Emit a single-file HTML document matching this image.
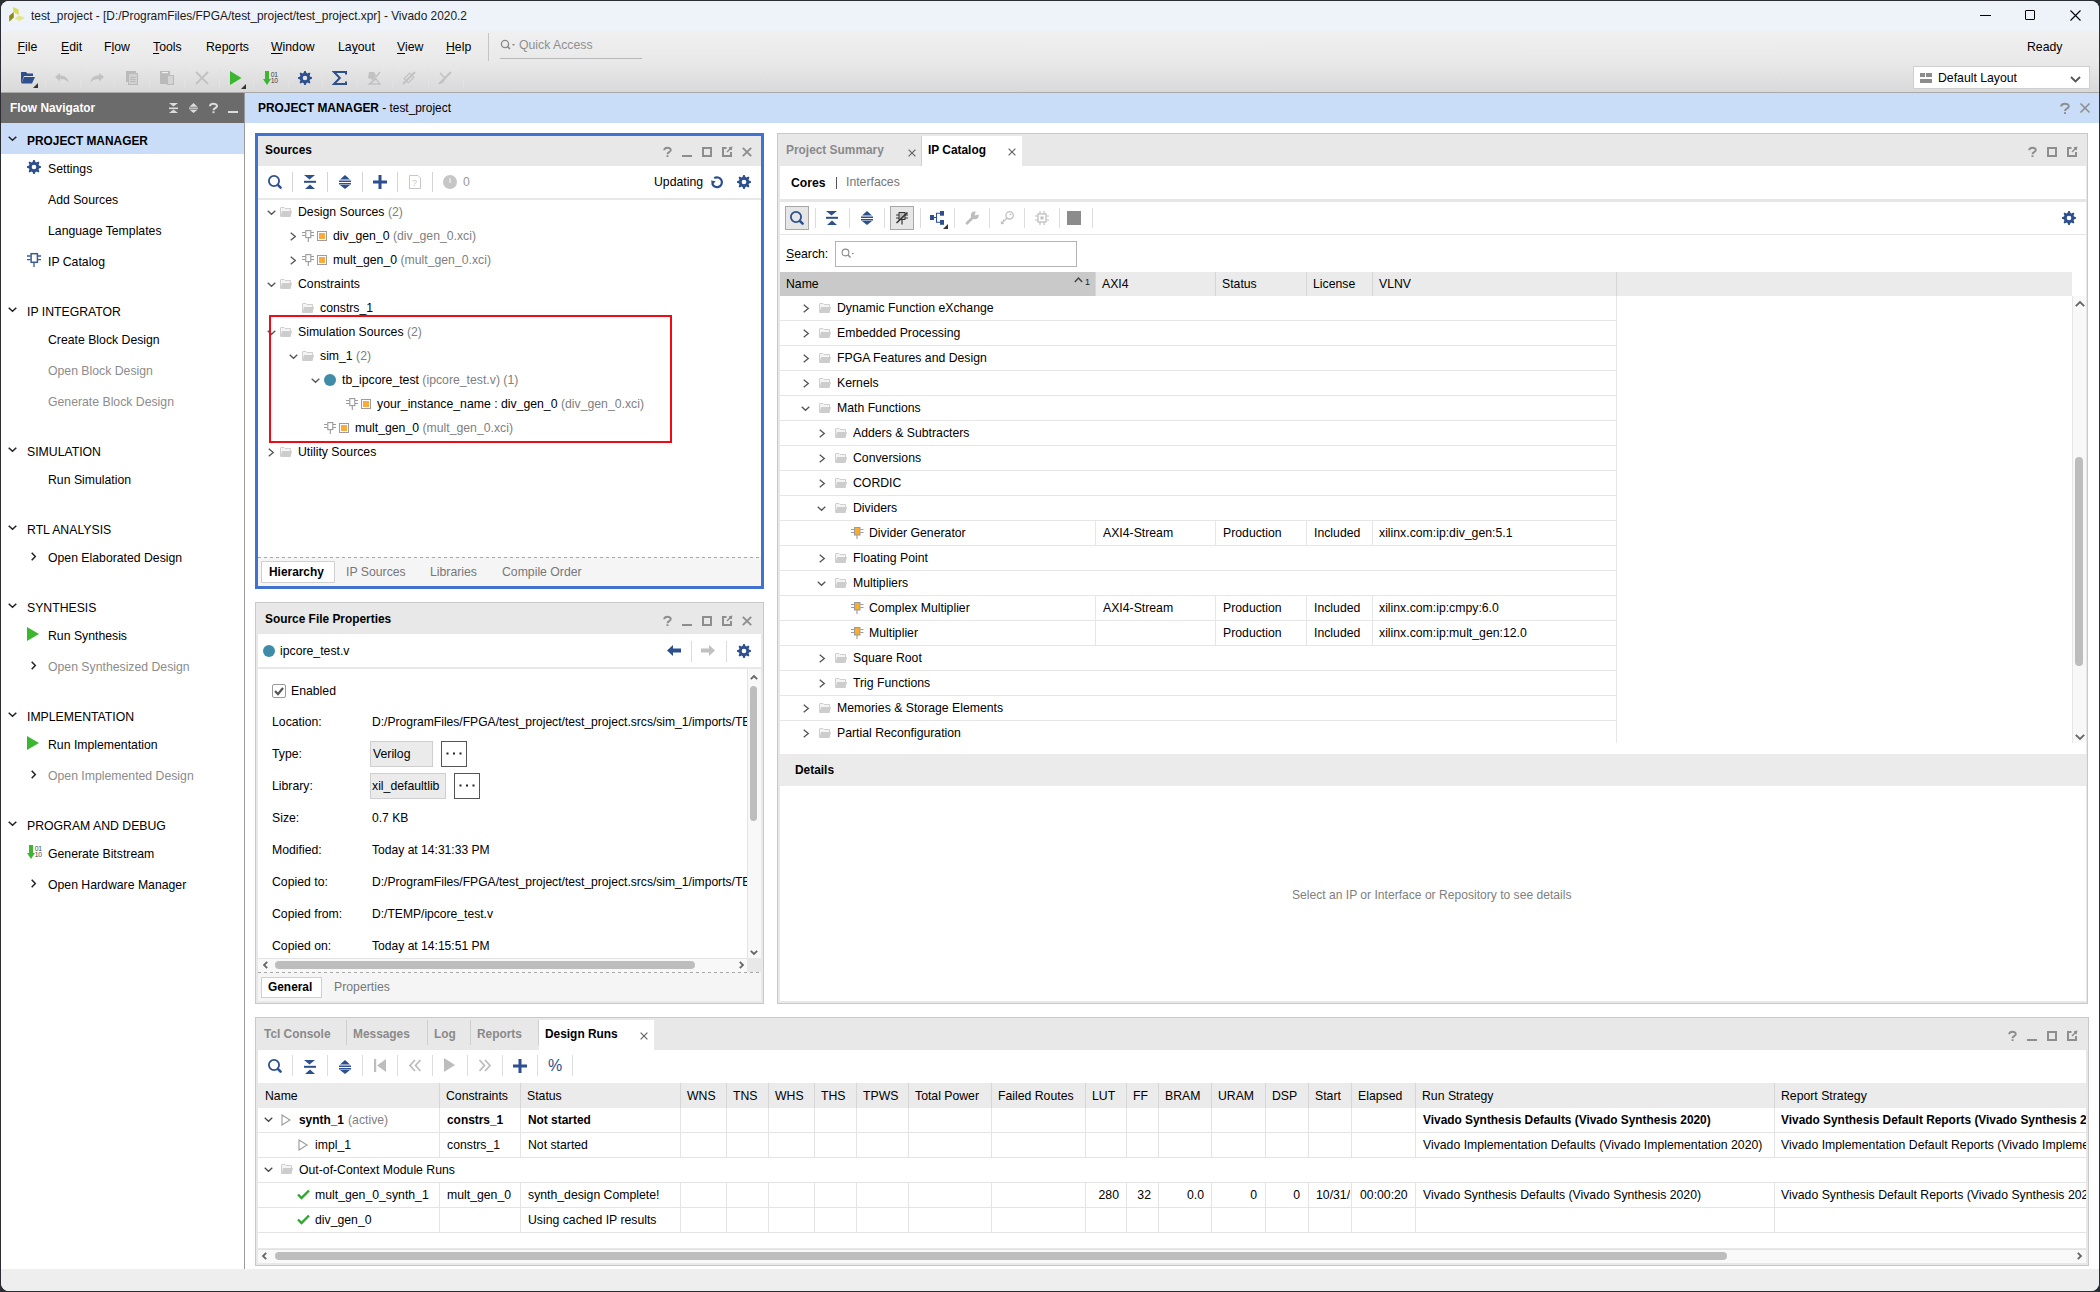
<!DOCTYPE html>
<html><head><meta charset="utf-8"><title>Vivado</title>
<style>
html,body{margin:0;padding:0;}
body{width:2100px;height:1292px;position:relative;overflow:hidden;background:#2a2d34;font-family:"Liberation Sans",sans-serif;}
.t{position:absolute;white-space:pre;line-height:1;}
svg{overflow:visible}
</style></head><body>

<div style="position:absolute;left:1px;top:1px;width:2098px;height:1290px;background:#fff;border-radius:8px;overflow:hidden"></div>
<div style="position:absolute;left:1px;top:1px;width:2098px;height:30px;background:#eef3fa;border-radius:8px 8px 0 0"></div>
<div style="position:absolute;left:1px;top:31px;width:2098px;height:61px;background:linear-gradient(#f0f0f0,#e9e9e9 50%,#d9d9d9)"></div>
<div style="position:absolute;left:1px;top:92px;width:2098px;height:1px;background:#a9a9a9"></div>
<div style="position:absolute;left:1px;top:1269px;width:2098px;height:22px;background:#eeeeee;border-radius:0 0 8px 8px"></div>
<svg style="position:absolute;left:9px;top:7px" width="17" height="16" viewBox="0 0 17 16"><polygon points="4,0 9.5,2.5 9.8,8 4.5,5" fill="#d8dc50"/><polygon points="0.2,8.8 4.7,5 4.8,10.5 0.3,14.8" fill="#8a8c10"/><polygon points="5.8,11.3 9.8,8.5 16,10.8 10.5,14" fill="#e3e68a"/></svg>
<div class="t" style="left:31px;top:11.23px;font-size:11.9px;color:#1a1a1a;">test_project - [D:/ProgramFiles/FPGA/test_project/test_project.xpr] - Vivado 2020.2</div>
<div style="position:absolute;left:1980px;top:15px;width:11px;height:1px;background:#000"></div>
<div style="position:absolute;left:2025px;top:10px;width:10px;height:10px;border:1px solid #000;box-sizing:border-box;border-radius:1px"></div>
<svg style="position:absolute;left:2070px;top:10px" width="11" height="11" viewBox="0 0 11 11"><path d="M0.5,0.5 L10.5,10.5 M10.5,0.5 L0.5,10.5" stroke="#000" stroke-width="1.1"/></svg>
<div class="t" style="left:17.5px;top:40.63px;font-size:12.25px;color:#000;text-underline-offset:2px;"><u>F</u>ile</div>
<div class="t" style="left:61px;top:40.63px;font-size:12.25px;color:#000;text-underline-offset:2px;"><u>E</u>dit</div>
<div class="t" style="left:104px;top:40.63px;font-size:12.25px;color:#000;text-underline-offset:2px;">F<u>l</u>ow</div>
<div class="t" style="left:153px;top:40.63px;font-size:12.25px;color:#000;text-underline-offset:2px;"><u>T</u>ools</div>
<div class="t" style="left:206px;top:40.63px;font-size:12.25px;color:#000;text-underline-offset:2px;">Rep<u>o</u>rts</div>
<div class="t" style="left:271px;top:40.63px;font-size:12.25px;color:#000;text-underline-offset:2px;"><u>W</u>indow</div>
<div class="t" style="left:338px;top:40.63px;font-size:12.25px;color:#000;text-underline-offset:2px;">La<u>y</u>out</div>
<div class="t" style="left:397px;top:40.63px;font-size:12.25px;color:#000;text-underline-offset:2px;"><u>V</u>iew</div>
<div class="t" style="left:446px;top:40.63px;font-size:12.25px;color:#000;text-underline-offset:2px;"><u>H</u>elp</div>
<div style="position:absolute;left:488px;top:33px;width:1px;height:28px;background:#c4c4c4"></div>
<svg style="position:absolute;left:500px;top:39px" width="16" height="12" viewBox="0 0 16 12"><circle cx="5" cy="5" r="3.6" fill="none" stroke="#8a8a8a" stroke-width="1.3"/><path d="M7.6,7.6 L10,10" stroke="#8a8a8a" stroke-width="1.6"/><path d="M12,5 L15,5 L13.5,7z" fill="#8a8a8a"/></svg>
<div class="t" style="left:519px;top:38.63px;font-size:12.25px;color:#8f8f8f;">Quick Access</div>
<div style="position:absolute;left:500px;top:58px;width:142px;height:1px;background:#b8b8b8"></div>
<div class="t" style="left:2027px;top:40.63px;font-size:12.25px;color:#000;">Ready</div>
<div style="position:absolute;left:1913px;top:66px;width:177px;height:23px;background:#fff;border:1px solid #cfcfcf;box-sizing:border-box"></div>
<svg style="position:absolute;left:1920px;top:73px" width="13" height="11" viewBox="0 0 13 11"><rect x="0" y="0" width="5" height="4" fill="#8c8c8c"/><rect x="6" y="0" width="6" height="4" fill="#8c8c8c"/><rect x="0" y="6" width="12" height="4" fill="#8c8c8c"/></svg>
<div class="t" style="left:1938px;top:71.63px;font-size:12.25px;color:#000;">Default Layout</div>
<svg style="position:absolute;left:2070px;top:76px" width="11" height="7" viewBox="0 0 11 7"><path d="M1,1 L5.5,5.5 L10,1" fill="none" stroke="#555" stroke-width="1.8"/></svg>
<div style="position:absolute;left:45px;top:68px;width:1px;height:20px;background:#e2e2e2"></div>
<div style="position:absolute;left:80px;top:68px;width:1px;height:20px;background:#e2e2e2"></div>
<div style="position:absolute;left:114px;top:68px;width:1px;height:20px;background:#e2e2e2"></div>
<div style="position:absolute;left:149px;top:68px;width:1px;height:20px;background:#e2e2e2"></div>
<div style="position:absolute;left:184px;top:68px;width:1px;height:20px;background:#e2e2e2"></div>
<div style="position:absolute;left:219px;top:68px;width:1px;height:20px;background:#e2e2e2"></div>
<div style="position:absolute;left:253px;top:68px;width:1px;height:20px;background:#e2e2e2"></div>
<div style="position:absolute;left:288px;top:68px;width:1px;height:20px;background:#e2e2e2"></div>
<div style="position:absolute;left:322px;top:68px;width:1px;height:20px;background:#e2e2e2"></div>
<div style="position:absolute;left:357px;top:68px;width:1px;height:20px;background:#e2e2e2"></div>
<div style="position:absolute;left:392px;top:68px;width:1px;height:20px;background:#e2e2e2"></div>
<div style="position:absolute;left:428px;top:68px;width:1px;height:20px;background:#e2e2e2"></div>
<div style="position:absolute;left:463px;top:68px;width:1px;height:20px;background:#e2e2e2"></div>
<svg style="position:absolute;left:21px;top:71px" width="14" height="13" viewBox="0 0 14 13"><path d="M0,1 L5,1 L6.5,2.5 L12,2.5 L12,5 L3,5 L0.5,12 L0,12z" fill="#2d4f8e"/><path d="M3,6 L14,6 L11,12.5 L0.5,12.5z" fill="#2d4f8e"/></svg>
<svg style="position:absolute;left:33px;top:83px" width="5" height="5" viewBox="0 0 5 5"><polygon points="5,0 5,5 0,5" fill="#333"/></svg>
<svg style="position:absolute;left:55px;top:73px" width="14" height="10" viewBox="0 0 14 10"><path d="M0,4 L5,0 L5,2.5 C10,2.5 13,5 13.5,9.5 C11.5,7 9,6 5,6 L5,8.5z" fill="#c2c2c2"/></svg>
<svg style="position:absolute;left:90px;top:73px" width="14" height="10" viewBox="0 0 14 10"><path d="M14,4 L9,0 L9,2.5 C4,2.5 1,5 0.5,9.5 C2.5,7 5,6 9,6 L9,8.5z" fill="#c2c2c2"/></svg>
<svg style="position:absolute;left:126px;top:71px" width="12" height="14" viewBox="0 0 12 14"><rect x="0" y="0" width="10" height="11" fill="#bababa"/><rect x="2.5" y="2.5" width="9" height="11" fill="#d0d0d0" stroke="#bababa"/><path d="M4.2,6.5h5.6M4.2,8.5h5.6M4.2,10.5h5.6" stroke="#bababa" stroke-width="1"/></svg>
<svg style="position:absolute;left:160px;top:71px" width="14" height="14" viewBox="0 0 14 14"><rect x="0" y="0" width="10" height="13" fill="#bababa"/><rect x="2" y="1" width="6" height="1.2" fill="#eeeeee"/><rect x="7.5" y="4.5" width="6" height="9" fill="#d4d4d4" stroke="#bababa"/></svg>
<svg style="position:absolute;left:195px;top:71px" width="14" height="14" viewBox="0 0 14 14"><path d="M1,1 L13,13 M13,1 L1,13" stroke="#c2c2c2" stroke-width="1.8"/></svg>
<svg style="position:absolute;left:230px;top:71px" width="12" height="14" viewBox="0 0 12 14"><polygon points="0,0 11.5,7 0,14" fill="#3cb630"/></svg>
<svg style="position:absolute;left:241px;top:84px" width="5" height="5" viewBox="0 0 5 5"><polygon points="5,0 5,5 0,5" fill="#333"/></svg>
<svg style="position:absolute;left:263px;top:71px" width="15" height="14" viewBox="0 0 15 14"><rect x="2" y="0" width="4" height="9" fill="#3cb630"/><polygon points="0,8 8,8 4,14" fill="#3cb630"/><text x="7.8" y="5.6" font-size="6.8" font-family="Liberation Sans" fill="#444" letter-spacing="-0.4">01</text><text x="7.8" y="11.6" font-size="6.8" font-family="Liberation Sans" fill="#444" letter-spacing="-0.4">10</text></svg>
<svg style="position:absolute;left:298px;top:71px" width="14" height="14" viewBox="0 0 14 14"><polygon points="6.31,0.03 7.69,0.03 8.51,2.02 9.45,2.41 11.44,1.59 12.41,2.56 11.59,4.55 11.98,5.49 13.97,6.31 13.97,7.69 11.98,8.51 11.59,9.45 12.41,11.44 11.44,12.41 9.45,11.59 8.51,11.98 7.69,13.97 6.31,13.97 5.49,11.98 4.55,11.59 2.56,12.41 1.59,11.44 2.41,9.45 2.02,8.51 0.03,7.69 0.03,6.31 2.02,5.49 2.41,4.55 1.59,2.56 2.56,1.59 4.55,2.41 5.49,2.02" fill="#2d4f8e"/><circle cx="7" cy="7" r="2.3" fill="#e3e3e3"/></svg>
<svg style="position:absolute;left:333px;top:71px" width="14" height="14" viewBox="0 0 14 14"><path d="M13,3.5 L13,1 L1,1 L6.8,7 L1,13 L13,13 L13,10.5" fill="none" stroke="#2d4f8e" stroke-width="2"/></svg>
<svg style="position:absolute;left:367px;top:71px" width="14" height="14" viewBox="0 0 14 14"><path d="M2,1 L7,1 L9,4 L6,9 L1,7z" fill="#c2c2c2"/><path d="M2,13 L13,13 L9,8 z" fill="none" stroke="#c2c2c2" stroke-width="1.3"/><path d="M13,1 L4,12" stroke="#c2c2c2" stroke-width="1.5"/></svg>
<svg style="position:absolute;left:402px;top:71px" width="14" height="14" viewBox="0 0 14 14"><rect x="3" y="4" width="8" height="6" transform="rotate(-45 7 7)" fill="none" stroke="#c2c2c2" stroke-width="1.2"/><path d="M1,13 L13,1" stroke="#c2c2c2" stroke-width="2"/></svg>
<svg style="position:absolute;left:438px;top:71px" width="14" height="14" viewBox="0 0 14 14"><path d="M1,13 L13,1" stroke="#c2c2c2" stroke-width="2"/><path d="M2,2 L7,7 L4,12" fill="none" stroke="#c2c2c2" stroke-width="1.5"/></svg>
<div style="position:absolute;left:1px;top:93px;width:243px;height:30px;background:#6b6b6b"></div>
<div class="t" style="left:10px;top:102.93px;font-size:11.9px;font-weight:bold;color:#fff;">Flow Navigator</div>
<svg style="position:absolute;left:169px;top:103px" width="9" height="10" viewBox="0 0 9 10"><polygon points="0,0 9,0 4.5,3.6" fill="#dcdcdc"/><rect x="0" y="4.5" width="9" height="1.6" fill="#dcdcdc"/><polygon points="0,10 9,10 4.5,6.6" fill="#dcdcdc"/></svg>
<svg style="position:absolute;left:189px;top:103px" width="9" height="10" viewBox="0 0 9 10"><polygon points="0.5,3.8 8.5,3.8 4.5,0" fill="#dcdcdc"/><rect x="0" y="4.4" width="9" height="1.8" fill="#bdbdbd"/><polygon points="0.5,6.8 8.5,6.8 4.5,10" fill="#dcdcdc"/></svg>
<svg style="position:absolute;left:208.5px;top:103px" width="9" height="10" viewBox="0 0 9 10"><path d="M1,3.2 C1,0 8,0 8,3 C8,5.3 4.5,5 4.5,7.2" fill="none" stroke="#dcdcdc" stroke-width="2"/><rect x="3.5" y="8.3" width="2" height="1.8" fill="#dcdcdc"/></svg>
<div style="position:absolute;left:228px;top:111px;width:10px;height:2px;background:#dcdcdc"></div>
<div style="position:absolute;left:244px;top:93px;width:1px;height:1176px;background:#9a9a9a"></div>
<div style="position:absolute;left:245px;top:93px;width:1854px;height:30px;background:#c9ddf8"></div>
<div class="t" style="left:258px;top:102.93px;font-size:11.9px;font-weight:bold;color:#000;">PROJECT MANAGER <span style="font-weight:normal">- test_project</span></div>
<svg style="position:absolute;left:2060px;top:103px" width="10" height="11" viewBox="0 0 10 11"><path d="M1.2,3.4 C1.2,0 8.8,0 8.8,3.2 C8.8,5.8 5,5.5 5,8" fill="none" stroke="#8e8e8e" stroke-width="2"/><rect x="4" y="9.2" width="2" height="1.8" fill="#8e8e8e"/></svg>
<svg style="position:absolute;left:2080px;top:103px" width="10" height="10" viewBox="0 0 10 10"><path d="M0.5,0.5 L9.5,9.5 M9.5,0.5 L0.5,9.5" stroke="#8e8e8e" stroke-width="1.6"/></svg>
<div style="position:absolute;left:1px;top:123px;width:243px;height:31px;background:#c9ddf8"></div>
<svg style="position:absolute;left:8px;top:136px" width="9" height="5" viewBox="0 0 9 5"><path d="M0.7,0.7 L4.5,4.3 L8.3,0.7" fill="none" stroke="#222" stroke-width="1.5"/></svg>
<div class="t" style="left:27px;top:135.93px;font-size:11.9px;font-weight:bold;color:#000;">PROJECT MANAGER</div>
<svg style="position:absolute;left:27px;top:160px" width="14" height="14" viewBox="0 0 14 14"><polygon points="6.31,0.03 7.69,0.03 8.51,2.02 9.45,2.41 11.44,1.59 12.41,2.56 11.59,4.55 11.98,5.49 13.97,6.31 13.97,7.69 11.98,8.51 11.59,9.45 12.41,11.44 11.44,12.41 9.45,11.59 8.51,11.98 7.69,13.97 6.31,13.97 5.49,11.98 4.55,11.59 2.56,12.41 1.59,11.44 2.41,9.45 2.02,8.51 0.03,7.69 0.03,6.31 2.02,5.49 2.41,4.55 1.59,2.56 2.56,1.59 4.55,2.41 5.49,2.02" fill="#2d4f8e"/><circle cx="7" cy="7" r="2.3" fill="#fff"/></svg>
<div class="t" style="left:48px;top:162.63px;font-size:12.25px;color:#000;">Settings</div>
<div class="t" style="left:48px;top:193.63px;font-size:12.25px;color:#000;">Add Sources</div>
<div class="t" style="left:48px;top:224.63px;font-size:12.25px;color:#000;">Language Templates</div>
<svg style="position:absolute;left:26.5px;top:252px" width="14" height="15" viewBox="0 0 14 15"><rect x="4.1" y="1.7" width="6.3" height="8.6" fill="none" stroke="#3b5a94" stroke-width="1.5"/><path d="M0,4h3.5M0,7.6h3.5M11,4h3M11,7.6h3M7,10.5v4.5" stroke="#3b5a94" stroke-width="1.3"/></svg>
<div class="t" style="left:48px;top:255.63px;font-size:12.25px;color:#000;">IP Catalog</div>
<svg style="position:absolute;left:8px;top:307px" width="9" height="5" viewBox="0 0 9 5"><path d="M0.7,0.7 L4.5,4.3 L8.3,0.7" fill="none" stroke="#222" stroke-width="1.5"/></svg>
<div class="t" style="left:27px;top:305.63px;font-size:12.25px;color:#000;letter-spacing:0px;">IP INTEGRATOR</div>
<div class="t" style="left:48px;top:333.63px;font-size:12.25px;color:#000;">Create Block Design</div>
<div class="t" style="left:48px;top:364.63px;font-size:12.25px;color:#8c8c8c;">Open Block Design</div>
<div class="t" style="left:48px;top:395.63px;font-size:12.25px;color:#8c8c8c;">Generate Block Design</div>
<svg style="position:absolute;left:8px;top:447px" width="9" height="5" viewBox="0 0 9 5"><path d="M0.7,0.7 L4.5,4.3 L8.3,0.7" fill="none" stroke="#222" stroke-width="1.5"/></svg>
<div class="t" style="left:27px;top:445.63px;font-size:12.25px;color:#000;letter-spacing:0px;">SIMULATION</div>
<div class="t" style="left:48px;top:473.63px;font-size:12.25px;color:#000;">Run Simulation</div>
<svg style="position:absolute;left:8px;top:525px" width="9" height="5" viewBox="0 0 9 5"><path d="M0.7,0.7 L4.5,4.3 L8.3,0.7" fill="none" stroke="#222" stroke-width="1.5"/></svg>
<div class="t" style="left:27px;top:523.63px;font-size:12.25px;color:#000;letter-spacing:0px;">RTL ANALYSIS</div>
<svg style="position:absolute;left:31px;top:552px" width="5" height="9" viewBox="0 0 5 9"><path d="M0.7,0.7 L4.3,4.5 L0.7,8.3" fill="none" stroke="#222" stroke-width="1.5"/></svg>
<div class="t" style="left:48px;top:551.63px;font-size:12.25px;color:#000;">Open Elaborated Design</div>
<svg style="position:absolute;left:8px;top:603px" width="9" height="5" viewBox="0 0 9 5"><path d="M0.7,0.7 L4.5,4.3 L8.3,0.7" fill="none" stroke="#222" stroke-width="1.5"/></svg>
<div class="t" style="left:27px;top:601.63px;font-size:12.25px;color:#000;letter-spacing:0px;">SYNTHESIS</div>
<svg style="position:absolute;left:27px;top:627px" width="12" height="14" viewBox="0 0 12 14"><polygon points="0,0 12,7 0,14" fill="#3cb630"/></svg>
<div class="t" style="left:48px;top:629.63px;font-size:12.25px;color:#000;">Run Synthesis</div>
<svg style="position:absolute;left:31px;top:661px" width="5" height="9" viewBox="0 0 5 9"><path d="M0.7,0.7 L4.3,4.5 L0.7,8.3" fill="none" stroke="#222" stroke-width="1.5"/></svg>
<div class="t" style="left:48px;top:660.63px;font-size:12.25px;color:#8c8c8c;">Open Synthesized Design</div>
<svg style="position:absolute;left:8px;top:712px" width="9" height="5" viewBox="0 0 9 5"><path d="M0.7,0.7 L4.5,4.3 L8.3,0.7" fill="none" stroke="#222" stroke-width="1.5"/></svg>
<div class="t" style="left:27px;top:710.63px;font-size:12.25px;color:#000;letter-spacing:0px;">IMPLEMENTATION</div>
<svg style="position:absolute;left:27px;top:736px" width="12" height="14" viewBox="0 0 12 14"><polygon points="0,0 12,7 0,14" fill="#3cb630"/></svg>
<div class="t" style="left:48px;top:738.63px;font-size:12.25px;color:#000;">Run Implementation</div>
<svg style="position:absolute;left:31px;top:770px" width="5" height="9" viewBox="0 0 5 9"><path d="M0.7,0.7 L4.3,4.5 L0.7,8.3" fill="none" stroke="#222" stroke-width="1.5"/></svg>
<div class="t" style="left:48px;top:769.63px;font-size:12.25px;color:#8c8c8c;">Open Implemented Design</div>
<svg style="position:absolute;left:8px;top:821px" width="9" height="5" viewBox="0 0 9 5"><path d="M0.7,0.7 L4.5,4.3 L8.3,0.7" fill="none" stroke="#222" stroke-width="1.5"/></svg>
<div class="t" style="left:27px;top:819.63px;font-size:12.25px;color:#000;letter-spacing:0px;">PROGRAM AND DEBUG</div>
<svg style="position:absolute;left:27px;top:845px" width="15" height="14" viewBox="0 0 15 14"><rect x="2" y="0" width="4" height="9" fill="#3cb630"/><polygon points="0,8 8,8 4,14" fill="#3cb630"/><text x="7.8" y="5.6" font-size="6.8" font-family="Liberation Sans" fill="#444" letter-spacing="-0.4">01</text><text x="7.8" y="11.6" font-size="6.8" font-family="Liberation Sans" fill="#444" letter-spacing="-0.4">10</text></svg>
<div class="t" style="left:48px;top:847.63px;font-size:12.25px;color:#000;">Generate Bitstream</div>
<svg style="position:absolute;left:31px;top:879px" width="5" height="9" viewBox="0 0 5 9"><path d="M0.7,0.7 L4.3,4.5 L0.7,8.3" fill="none" stroke="#222" stroke-width="1.5"/></svg>
<div class="t" style="left:48px;top:878.63px;font-size:12.25px;color:#000;">Open Hardware Manager</div>
<div style="position:absolute;left:255px;top:133px;width:509px;height:456px;border:3px solid #4272cf;box-sizing:border-box;background:#fff"></div>
<div style="position:absolute;left:258px;top:136px;width:503px;height:30px;background:#e8e8e8"></div>
<div class="t" style="left:265px;top:145.43px;font-size:11.9px;font-weight:bold;color:#000;">Sources</div>
<svg style="position:absolute;left:662.5px;top:147px" width="9" height="10" viewBox="0 0 9 10"><path d="M1.2,3.2 C1.2,0 7.8,0 7.8,3 C7.8,5.3 4.5,5 4.5,7.2" fill="none" stroke="#8e8e8e" stroke-width="1.9"/><rect x="3.5" y="8.3" width="2" height="1.7" fill="#8e8e8e"/></svg>
<div style="position:absolute;left:682px;top:155px;width:10px;height:2px;background:#8e8e8e"></div>
<div style="position:absolute;left:702px;top:147px;width:10px;height:10px;border:2px solid #8e8e8e;box-sizing:border-box"></div>
<svg style="position:absolute;left:722px;top:147px" width="10" height="10" viewBox="0 0 10 10"><path d="M4.5,1 L1,1 L1,9 L9,9 L9,5" fill="none" stroke="#8e8e8e" stroke-width="2"/><path d="M5,5 L9,1 M7,1 L9.5,0.5 L9,3" fill="none" stroke="#8e8e8e" stroke-width="1.5"/></svg>
<svg style="position:absolute;left:742px;top:147px" width="10" height="10" viewBox="0 0 10 10"><path d="M0.8,0.8 L9.2,9.2 M9.2,0.8 L0.8,9.2" stroke="#8e8e8e" stroke-width="1.9"/></svg>
<div style="position:absolute;left:292px;top:172px;width:1px;height:20px;background:#d4d4d4"></div>
<div style="position:absolute;left:327px;top:172px;width:1px;height:20px;background:#d4d4d4"></div>
<div style="position:absolute;left:362px;top:172px;width:1px;height:20px;background:#d4d4d4"></div>
<div style="position:absolute;left:397px;top:172px;width:1px;height:20px;background:#d4d4d4"></div>
<div style="position:absolute;left:432px;top:172px;width:1px;height:20px;background:#d4d4d4"></div>
<svg style="position:absolute;left:268px;top:175px" width="14" height="14" viewBox="0 0 14 14"><circle cx="6" cy="6" r="5.1" fill="none" stroke="#2d4f8e" stroke-width="1.8"/><path d="M10.3,10.3 L12.6,12.6" stroke="#2d4f8e" stroke-width="2.6" stroke-linecap="round"/></svg>
<svg style="position:absolute;left:304px;top:175px" width="12" height="14" viewBox="0 0 12 14"><polygon points="0,0 11,0 5.5,4.5" fill="#2d4f8e"/><rect x="0" y="5.8" width="12" height="2" fill="#2d4f8e"/><polygon points="1,14 11,14 6,9.5" fill="#2d4f8e"/></svg>
<svg style="position:absolute;left:339px;top:175px" width="12" height="14" viewBox="0 0 12 14"><polygon points="1,4.5 11,4.5 6,0" fill="#2d4f8e"/><rect x="0" y="5.5" width="12" height="1.5" fill="#2d4f8e"/><rect x="0" y="8" width="12" height="1.5" fill="#2d4f8e"/><polygon points="1,10 11,10 6,14" fill="#2d4f8e"/></svg>
<svg style="position:absolute;left:373px;top:175px" width="14" height="14" viewBox="0 0 14 14"><path d="M7,0 V14 M0,7 H14" stroke="#2d4f8e" stroke-width="3"/></svg>
<svg style="position:absolute;left:409px;top:175px" width="12" height="14" viewBox="0 0 12 14"><path d="M0.5,0.5 H9 L11.5,3 V13.5 H0.5z" fill="none" stroke="#c8c8c8"/><text x="3" y="10.5" font-size="9" font-family="Liberation Sans" fill="#c8c8c8">?</text></svg>
<div style="position:absolute;left:443px;top:175px;width:14px;height:14px;background:#c6c6c6;border-radius:50%"></div>
<div style="position:absolute;left:449px;top:178px;width:2px;height:5px;background:#e0e0e0"></div>
<div class="t" style="left:463px;top:175.63px;font-size:12.25px;color:#9a9a9a;">0</div>
<div class="t" style="left:654px;top:175.63px;font-size:12.25px;color:#000;">Updating</div>
<svg style="position:absolute;left:711px;top:176px" width="12" height="12" viewBox="0 0 12 12"><path d="M3.2,2.2 A4.9,4.9 0 1 1 1.2,7.2" fill="none" stroke="#2d4f8e" stroke-width="2.2"/><polygon points="0,4.5 4.6,5.2 1.2,9.2" fill="#2d4f8e"/></svg>
<svg style="position:absolute;left:737px;top:175px" width="14" height="14" viewBox="0 0 14 14"><polygon points="6.31,0.03 7.69,0.03 8.51,2.02 9.45,2.41 11.44,1.59 12.41,2.56 11.59,4.55 11.98,5.49 13.97,6.31 13.97,7.69 11.98,8.51 11.59,9.45 12.41,11.44 11.44,12.41 9.45,11.59 8.51,11.98 7.69,13.97 6.31,13.97 5.49,11.98 4.55,11.59 2.56,12.41 1.59,11.44 2.41,9.45 2.02,8.51 0.03,7.69 0.03,6.31 2.02,5.49 2.41,4.55 1.59,2.56 2.56,1.59 4.55,2.41 5.49,2.02" fill="#2d4f8e"/><circle cx="7" cy="7" r="2.3" fill="#fff"/></svg>
<div style="position:absolute;left:258px;top:198px;width:503px;height:2px;background:#e8e8e8"></div>
<svg style="position:absolute;left:267px;top:210px" width="9" height="5" viewBox="0 0 9 5"><path d="M0.7,0.7 L4.5,4.3 L8.3,0.7" fill="none" stroke="#555" stroke-width="1.3"/></svg>
<svg style="position:absolute;left:280px;top:207px" width="12" height="10" viewBox="0 0 12 10"><path d="M0.5,9.5 V1 Q0.5,0.5 1,0.5 H4 L5,1.5 H10.5 V4" fill="#f4f4f4" stroke="#cfcfcf" stroke-width="1"/><path d="M2,4 H12 L10.5,10 H0.5z" fill="#cdcdcd"/></svg>
<div class="t" style="left:298px;top:205.63px;font-size:12.25px;color:#000;">Design Sources<span style="color:#808080"> (2)</span></div>
<svg style="position:absolute;left:290px;top:232px" width="6" height="9" viewBox="0 0 6 9"><path d="M0.7,0.7 L5.3,4.5 L0.7,8.3" fill="none" stroke="#555" stroke-width="1.3"/></svg>
<svg style="position:absolute;left:302px;top:230px" width="12" height="12" viewBox="0 0 12 12"><rect x="3.8" y="0.6" width="5" height="7" fill="none" stroke="#9a9a9a" stroke-width="1.1"/><path d="M0,2.5h3.5M0,5.5h3.5M9,2.5h3M9,5.5h3M6.3,7.6v4.4" stroke="#9a9a9a" stroke-width="1.1"/></svg>
<div style="position:absolute;left:317px;top:231px;width:10px;height:10px;background:#fcaa3a;border:1px solid #9c9c9c;box-shadow:inset 0 0 0 1px #fff;box-sizing:border-box"></div>
<div class="t" style="left:333px;top:229.63px;font-size:12.25px;color:#000;">div_gen_0<span style="color:#808080"> (div_gen_0.xci)</span></div>
<svg style="position:absolute;left:290px;top:256px" width="6" height="9" viewBox="0 0 6 9"><path d="M0.7,0.7 L5.3,4.5 L0.7,8.3" fill="none" stroke="#555" stroke-width="1.3"/></svg>
<svg style="position:absolute;left:302px;top:254px" width="12" height="12" viewBox="0 0 12 12"><rect x="3.8" y="0.6" width="5" height="7" fill="none" stroke="#9a9a9a" stroke-width="1.1"/><path d="M0,2.5h3.5M0,5.5h3.5M9,2.5h3M9,5.5h3M6.3,7.6v4.4" stroke="#9a9a9a" stroke-width="1.1"/></svg>
<div style="position:absolute;left:317px;top:255px;width:10px;height:10px;background:#fcaa3a;border:1px solid #9c9c9c;box-shadow:inset 0 0 0 1px #fff;box-sizing:border-box"></div>
<div class="t" style="left:333px;top:253.63px;font-size:12.25px;color:#000;">mult_gen_0<span style="color:#808080"> (mult_gen_0.xci)</span></div>
<svg style="position:absolute;left:267px;top:282px" width="9" height="5" viewBox="0 0 9 5"><path d="M0.7,0.7 L4.5,4.3 L8.3,0.7" fill="none" stroke="#555" stroke-width="1.3"/></svg>
<svg style="position:absolute;left:280px;top:279px" width="12" height="10" viewBox="0 0 12 10"><path d="M0.5,9.5 V1 Q0.5,0.5 1,0.5 H4 L5,1.5 H10.5 V4" fill="#f4f4f4" stroke="#cfcfcf" stroke-width="1"/><path d="M2,4 H12 L10.5,10 H0.5z" fill="#cdcdcd"/></svg>
<div class="t" style="left:298px;top:277.63px;font-size:12.25px;color:#000;">Constraints<span style="color:#808080"></span></div>
<svg style="position:absolute;left:302px;top:303px" width="12" height="10" viewBox="0 0 12 10"><path d="M0.5,9.5 V1 Q0.5,0.5 1,0.5 H4 L5,1.5 H10.5 V4" fill="#f4f4f4" stroke="#cfcfcf" stroke-width="1"/><path d="M2,4 H12 L10.5,10 H0.5z" fill="#cdcdcd"/></svg>
<div class="t" style="left:320px;top:301.63px;font-size:12.25px;color:#000;">constrs_1<span style="color:#808080"></span></div>
<svg style="position:absolute;left:267px;top:330px" width="9" height="5" viewBox="0 0 9 5"><path d="M0.7,0.7 L4.5,4.3 L8.3,0.7" fill="none" stroke="#555" stroke-width="1.3"/></svg>
<svg style="position:absolute;left:280px;top:327px" width="12" height="10" viewBox="0 0 12 10"><path d="M0.5,9.5 V1 Q0.5,0.5 1,0.5 H4 L5,1.5 H10.5 V4" fill="#f4f4f4" stroke="#cfcfcf" stroke-width="1"/><path d="M2,4 H12 L10.5,10 H0.5z" fill="#cdcdcd"/></svg>
<div class="t" style="left:298px;top:325.63px;font-size:12.25px;color:#000;">Simulation Sources<span style="color:#808080"> (2)</span></div>
<svg style="position:absolute;left:289px;top:354px" width="9" height="5" viewBox="0 0 9 5"><path d="M0.7,0.7 L4.5,4.3 L8.3,0.7" fill="none" stroke="#555" stroke-width="1.3"/></svg>
<svg style="position:absolute;left:302px;top:351px" width="12" height="10" viewBox="0 0 12 10"><path d="M0.5,9.5 V1 Q0.5,0.5 1,0.5 H4 L5,1.5 H10.5 V4" fill="#f4f4f4" stroke="#cfcfcf" stroke-width="1"/><path d="M2,4 H12 L10.5,10 H0.5z" fill="#cdcdcd"/></svg>
<div class="t" style="left:320px;top:349.63px;font-size:12.25px;color:#000;">sim_1<span style="color:#808080"> (2)</span></div>
<svg style="position:absolute;left:311px;top:378px" width="9" height="5" viewBox="0 0 9 5"><path d="M0.7,0.7 L4.5,4.3 L8.3,0.7" fill="none" stroke="#555" stroke-width="1.3"/></svg>
<div style="position:absolute;left:324px;top:374px;width:12px;height:12px;background:#3f8ba8;border-radius:50%"></div>
<div class="t" style="left:342px;top:373.63px;font-size:12.25px;color:#000;">tb_ipcore_test<span style="color:#808080"> (ipcore_test.v) (1)</span></div>
<svg style="position:absolute;left:346px;top:398px" width="12" height="12" viewBox="0 0 12 12"><rect x="3.8" y="0.6" width="5" height="7" fill="none" stroke="#9a9a9a" stroke-width="1.1"/><path d="M0,2.5h3.5M0,5.5h3.5M9,2.5h3M9,5.5h3M6.3,7.6v4.4" stroke="#9a9a9a" stroke-width="1.1"/></svg>
<div style="position:absolute;left:361px;top:399px;width:10px;height:10px;background:#fcaa3a;border:1px solid #9c9c9c;box-shadow:inset 0 0 0 1px #fff;box-sizing:border-box"></div>
<div class="t" style="left:377px;top:397.63px;font-size:12.25px;color:#000;">your_instance_name : div_gen_0<span style="color:#808080"> (div_gen_0.xci)</span></div>
<svg style="position:absolute;left:324px;top:422px" width="12" height="12" viewBox="0 0 12 12"><rect x="3.8" y="0.6" width="5" height="7" fill="none" stroke="#9a9a9a" stroke-width="1.1"/><path d="M0,2.5h3.5M0,5.5h3.5M9,2.5h3M9,5.5h3M6.3,7.6v4.4" stroke="#9a9a9a" stroke-width="1.1"/></svg>
<div style="position:absolute;left:339px;top:423px;width:10px;height:10px;background:#fcaa3a;border:1px solid #9c9c9c;box-shadow:inset 0 0 0 1px #fff;box-sizing:border-box"></div>
<div class="t" style="left:355px;top:421.63px;font-size:12.25px;color:#000;">mult_gen_0<span style="color:#808080"> (mult_gen_0.xci)</span></div>
<svg style="position:absolute;left:268px;top:448px" width="6" height="9" viewBox="0 0 6 9"><path d="M0.7,0.7 L5.3,4.5 L0.7,8.3" fill="none" stroke="#555" stroke-width="1.3"/></svg>
<svg style="position:absolute;left:280px;top:447px" width="12" height="10" viewBox="0 0 12 10"><path d="M0.5,9.5 V1 Q0.5,0.5 1,0.5 H4 L5,1.5 H10.5 V4" fill="#f4f4f4" stroke="#cfcfcf" stroke-width="1"/><path d="M2,4 H12 L10.5,10 H0.5z" fill="#cdcdcd"/></svg>
<div class="t" style="left:298px;top:445.63px;font-size:12.25px;color:#000;">Utility Sources<span style="color:#808080"></span></div>
<div style="position:absolute;left:269px;top:315px;width:403px;height:128px;border:2px solid #f00a14;box-sizing:border-box"></div>
<div style="position:absolute;left:258px;top:557px;width:503px;height:29px;background:#f5f5f5"></div>
<div style="position:absolute;left:258px;top:557px;width:503px;height:1px;background:repeating-linear-gradient(90deg,#a8a8a8 0 3px,transparent 3px 6px)"></div>
<div style="position:absolute;left:261px;top:561px;width:74px;height:22px;background:#fff;border:1px solid #d0d0d0;box-sizing:border-box"></div>
<div class="t" style="left:269px;top:566.93px;font-size:11.9px;font-weight:bold;color:#000;">Hierarchy</div>
<div class="t" style="left:346px;top:565.63px;font-size:12.25px;color:#777;">IP Sources</div>
<div class="t" style="left:430px;top:565.63px;font-size:12.25px;color:#777;">Libraries</div>
<div class="t" style="left:502px;top:565.63px;font-size:12.25px;color:#777;">Compile Order</div>
<div style="position:absolute;left:255px;top:602px;width:509px;height:402px;border:1px solid #c9c9c9;box-sizing:border-box;background:#e8e8e8"></div>
<div class="t" style="left:265px;top:613.93px;font-size:11.9px;font-weight:bold;color:#000;">Source File Properties</div>
<svg style="position:absolute;left:662.5px;top:616px" width="9" height="10" viewBox="0 0 9 10"><path d="M1.2,3.2 C1.2,0 7.8,0 7.8,3 C7.8,5.3 4.5,5 4.5,7.2" fill="none" stroke="#8e8e8e" stroke-width="1.9"/><rect x="3.5" y="8.3" width="2" height="1.7" fill="#8e8e8e"/></svg>
<div style="position:absolute;left:682px;top:624px;width:10px;height:2px;background:#8e8e8e"></div>
<div style="position:absolute;left:702px;top:616px;width:10px;height:10px;border:2px solid #8e8e8e;box-sizing:border-box"></div>
<svg style="position:absolute;left:722px;top:616px" width="10" height="10" viewBox="0 0 10 10"><path d="M4.5,1 L1,1 L1,9 L9,9 L9,5" fill="none" stroke="#8e8e8e" stroke-width="2"/><path d="M5,5 L9,1 M7,1 L9.5,0.5 L9,3" fill="none" stroke="#8e8e8e" stroke-width="1.5"/></svg>
<svg style="position:absolute;left:742px;top:616px" width="10" height="10" viewBox="0 0 10 10"><path d="M0.8,0.8 L9.2,9.2 M9.2,0.8 L0.8,9.2" stroke="#8e8e8e" stroke-width="1.9"/></svg>
<div style="position:absolute;left:258px;top:634px;width:503px;height:33px;background:#fff"></div>
<div style="position:absolute;left:263px;top:645px;width:12px;height:12px;background:#3f8ba8;border-radius:50%"></div>
<div class="t" style="left:280px;top:644.63px;font-size:12.25px;color:#000;">ipcore_test.v</div>
<svg style="position:absolute;left:667px;top:645px" width="14" height="11" viewBox="0 0 14 11"><polygon points="0,5.5 6,0 6,3.5 14,3.5 14,7.5 6,7.5 6,11" fill="#2d4f8e"/></svg>
<div style="position:absolute;left:691px;top:641px;width:1px;height:21px;background:#dcdcdc"></div>
<svg style="position:absolute;left:701px;top:645px" width="14" height="11" viewBox="0 0 14 11"><polygon points="14,5.5 8,0 8,3.5 0,3.5 0,7.5 8,7.5 8,11" fill="#c0c0c0"/></svg>
<div style="position:absolute;left:726px;top:641px;width:1px;height:21px;background:#dcdcdc"></div>
<svg style="position:absolute;left:737px;top:644px" width="14" height="14" viewBox="0 0 14 14"><polygon points="6.31,0.03 7.69,0.03 8.51,2.02 9.45,2.41 11.44,1.59 12.41,2.56 11.59,4.55 11.98,5.49 13.97,6.31 13.97,7.69 11.98,8.51 11.59,9.45 12.41,11.44 11.44,12.41 9.45,11.59 8.51,11.98 7.69,13.97 6.31,13.97 5.49,11.98 4.55,11.59 2.56,12.41 1.59,11.44 2.41,9.45 2.02,8.51 0.03,7.69 0.03,6.31 2.02,5.49 2.41,4.55 1.59,2.56 2.56,1.59 4.55,2.41 5.49,2.02" fill="#2d4f8e"/><circle cx="7" cy="7" r="2.3" fill="#fff"/></svg>
<div style="position:absolute;left:258px;top:669px;width:503px;height:303px;background:#fff"></div>
<div style="position:absolute;left:272px;top:684px;width:14px;height:14px;border:1px solid #9a9a9a;border-radius:2px;box-sizing:border-box;background:#fff"></div>
<svg style="position:absolute;left:274px;top:686px" width="10" height="10" viewBox="0 0 10 10"><path d="M1,5 L4,8.2 L9,2" fill="none" stroke="#555" stroke-width="2.2"/></svg>
<div class="t" style="left:291px;top:684.63px;font-size:12.25px;color:#000;">Enabled</div>
<div class="t" style="left:272px;top:715.63px;font-size:12.25px;color:#000;">Location:</div>
<div style="position:absolute;left:372px;top:715px;width:375px;height:15px;overflow:hidden">
<div class="t" style="left:0px;top:0.76px;font-size:12.1px;color:#000;">D:/ProgramFiles/FPGA/test_project/test_project.srcs/sim_1/imports/TE</div>
</div>
<div class="t" style="left:272px;top:747.63px;font-size:12.25px;color:#000;">Type:</div>
<div class="t" style="left:272px;top:779.63px;font-size:12.25px;color:#000;">Library:</div>
<div class="t" style="left:272px;top:811.63px;font-size:12.25px;color:#000;">Size:</div>
<div style="position:absolute;left:372px;top:811px;width:375px;height:15px;overflow:hidden">
<div class="t" style="left:0px;top:0.76px;font-size:12.1px;color:#000;">0.7 KB</div>
</div>
<div class="t" style="left:272px;top:843.63px;font-size:12.25px;color:#000;">Modified:</div>
<div style="position:absolute;left:372px;top:843px;width:375px;height:15px;overflow:hidden">
<div class="t" style="left:0px;top:0.76px;font-size:12.1px;color:#000;">Today at 14:31:33 PM</div>
</div>
<div class="t" style="left:272px;top:875.63px;font-size:12.25px;color:#000;">Copied to:</div>
<div style="position:absolute;left:372px;top:875px;width:375px;height:15px;overflow:hidden">
<div class="t" style="left:0px;top:0.76px;font-size:12.1px;color:#000;">D:/ProgramFiles/FPGA/test_project/test_project.srcs/sim_1/imports/TE</div>
</div>
<div class="t" style="left:272px;top:907.63px;font-size:12.25px;color:#000;">Copied from:</div>
<div style="position:absolute;left:372px;top:907px;width:375px;height:15px;overflow:hidden">
<div class="t" style="left:0px;top:0.76px;font-size:12.1px;color:#000;">D:/TEMP/ipcore_test.v</div>
</div>
<div class="t" style="left:272px;top:939.63px;font-size:12.25px;color:#000;">Copied on:</div>
<div style="position:absolute;left:372px;top:939px;width:375px;height:15px;overflow:hidden">
<div class="t" style="left:0px;top:0.76px;font-size:12.1px;color:#000;">Today at 14:15:51 PM</div>
</div>
<div style="position:absolute;left:370px;top:741px;width:63px;height:26px;background:#ebebeb;border:1px solid #cfcfcf;box-sizing:border-box"></div>
<div class="t" style="left:373px;top:747.63px;font-size:12.25px;color:#000;">Verilog</div>
<div style="position:absolute;left:441px;top:741px;width:26px;height:26px;background:#fff;border:1px solid #555;box-sizing:border-box"></div>
<svg style="position:absolute;left:446px;top:752px" width="16" height="3" viewBox="0 0 16 3"><rect x="0.5" y="0.5" width="2" height="2" fill="#222"/><rect x="7" y="0.5" width="2" height="2" fill="#222"/><rect x="13.5" y="0.5" width="2" height="2" fill="#222"/></svg>
<div style="position:absolute;left:370px;top:773px;width:76px;height:26px;background:#ebebeb;border:1px solid #cfcfcf;box-sizing:border-box"></div>
<div class="t" style="left:372px;top:779.63px;font-size:12.25px;color:#000;">xil_defaultlib</div>
<div style="position:absolute;left:454px;top:773px;width:26px;height:26px;background:#fff;border:1px solid #555;box-sizing:border-box"></div>
<svg style="position:absolute;left:459px;top:784px" width="16" height="3" viewBox="0 0 16 3"><rect x="0.5" y="0.5" width="2" height="2" fill="#222"/><rect x="7" y="0.5" width="2" height="2" fill="#222"/><rect x="13.5" y="0.5" width="2" height="2" fill="#222"/></svg>
<div style="position:absolute;left:747px;top:669px;width:14px;height:289px;background:#f8f8f8;border-left:1px solid #e4e4e4;box-sizing:border-box"></div>
<svg style="position:absolute;left:750px;top:675px" width="8" height="5" viewBox="0 0 8 5"><path d="M0.8,4.2 L4,1 L7.2,4.2" fill="none" stroke="#666" stroke-width="1.8"/></svg>
<div style="position:absolute;left:750px;top:686px;width:7px;height:135px;background:#bdbdbd;border-radius:4px"></div>
<svg style="position:absolute;left:750px;top:950px" width="8" height="5" viewBox="0 0 8 5"><path d="M0.8,0.8 L4,4 L7.2,0.8" fill="none" stroke="#666" stroke-width="1.8"/></svg>
<div style="position:absolute;left:258px;top:958px;width:489px;height:14px;background:#f8f8f8;border-top:1px solid #e4e4e4;box-sizing:border-box"></div>
<div style="position:absolute;left:747px;top:958px;width:14px;height:14px;background:#e8e8e8"></div>
<svg style="position:absolute;left:263px;top:961px" width="5" height="8" viewBox="0 0 5 8"><path d="M4.2,0.8 L1,4 L4.2,7.2" fill="none" stroke="#666" stroke-width="1.8"/></svg>
<div style="position:absolute;left:275px;top:961px;width:420px;height:8px;background:#bdbdbd;border-radius:4px"></div>
<svg style="position:absolute;left:739px;top:961px" width="5" height="8" viewBox="0 0 5 8"><path d="M0.8,0.8 L4,4 L0.8,7.2" fill="none" stroke="#666" stroke-width="1.8"/></svg>
<div style="position:absolute;left:258px;top:972px;width:503px;height:29px;background:#f5f5f5"></div>
<div style="position:absolute;left:258px;top:972px;width:503px;height:1px;background:repeating-linear-gradient(90deg,#a8a8a8 0 3px,transparent 3px 6px)"></div>
<div style="position:absolute;left:261px;top:977px;width:61px;height:21px;background:#fff;border:1px solid #d0d0d0;box-sizing:border-box"></div>
<div class="t" style="left:268px;top:981.93px;font-size:11.9px;font-weight:bold;color:#000;">General</div>
<div class="t" style="left:334px;top:980.63px;font-size:12.25px;color:#777;">Properties</div>
<div style="position:absolute;left:777px;top:133px;width:1311px;height:871px;border:1px solid #c9c9c9;box-sizing:border-box;background:#e8e8e8"></div>
<div style="position:absolute;left:780px;top:136px;width:142px;height:30px;background:#e8e8e8"></div>
<div class="t" style="left:786px;top:144.93px;font-size:11.9px;font-weight:bold;color:#8a8a8a;">Project Summary</div>
<svg style="position:absolute;left:908px;top:149px" width="8" height="8" viewBox="0 0 8 8"><path d="M0.6,0.6 L7.4,7.4 M7.4,0.6 L0.6,7.4" stroke="#666" stroke-width="1.2"/></svg>
<div style="position:absolute;left:921px;top:136px;width:1px;height:30px;background:#cfcfcf"></div>
<div style="position:absolute;left:922px;top:136px;width:100px;height:31px;background:#fff"></div>
<div class="t" style="left:928px;top:144.93px;font-size:11.9px;font-weight:bold;color:#000;">IP Catalog</div>
<svg style="position:absolute;left:1008px;top:148px" width="8" height="8" viewBox="0 0 8 8"><path d="M0.6,0.6 L7.4,7.4 M7.4,0.6 L0.6,7.4" stroke="#666" stroke-width="1.2"/></svg>
<svg style="position:absolute;left:2027.5px;top:147px" width="9" height="10" viewBox="0 0 9 10"><path d="M1.2,3.2 C1.2,0 7.8,0 7.8,3 C7.8,5.3 4.5,5 4.5,7.2" fill="none" stroke="#8e8e8e" stroke-width="1.9"/><rect x="3.5" y="8.3" width="2" height="1.7" fill="#8e8e8e"/></svg>
<div style="position:absolute;left:2047px;top:147px;width:10px;height:10px;border:2px solid #8e8e8e;box-sizing:border-box"></div>
<svg style="position:absolute;left:2067px;top:147px" width="10" height="10" viewBox="0 0 10 10"><path d="M4.5,1 L1,1 L1,9 L9,9 L9,5" fill="none" stroke="#8e8e8e" stroke-width="2"/><path d="M5,5 L9,1 M7,1 L9.5,0.5 L9,3" fill="none" stroke="#8e8e8e" stroke-width="1.5"/></svg>
<div style="position:absolute;left:780px;top:166px;width:1306px;height:33px;background:#fff"></div>
<div class="t" style="left:791px;top:176.67px;font-size:12.2px;font-weight:bold;color:#000;">Cores</div>
<div style="position:absolute;left:836px;top:177px;width:1px;height:12px;background:#555"></div>
<div class="t" style="left:846px;top:175.63px;font-size:12.25px;color:#777;">Interfaces</div>
<div style="position:absolute;left:780px;top:199px;width:1306px;height:3px;background:#e6e6e6"></div>
<div style="position:absolute;left:780px;top:202px;width:1306px;height:33px;background:#fff"></div>
<div style="position:absolute;left:780px;top:234px;width:1306px;height:2px;background:#e6e6e6"></div>
<div style="position:absolute;left:785px;top:206px;width:24px;height:24px;background:#e6e6e6;border:1px solid #a8a8a8;box-sizing:border-box"></div>
<svg style="position:absolute;left:790px;top:211px" width="14" height="14" viewBox="0 0 14 14"><circle cx="6" cy="6" r="5.1" fill="none" stroke="#2d4f8e" stroke-width="1.8"/><path d="M10.3,10.3 L12.6,12.6" stroke="#2d4f8e" stroke-width="2.6" stroke-linecap="round"/></svg>
<div style="position:absolute;left:815px;top:208px;width:1px;height:20px;background:#dcdcdc"></div>
<div style="position:absolute;left:849px;top:208px;width:1px;height:20px;background:#dcdcdc"></div>
<div style="position:absolute;left:884px;top:208px;width:1px;height:20px;background:#dcdcdc"></div>
<div style="position:absolute;left:920px;top:208px;width:1px;height:20px;background:#dcdcdc"></div>
<div style="position:absolute;left:954px;top:208px;width:1px;height:20px;background:#dcdcdc"></div>
<div style="position:absolute;left:989px;top:208px;width:1px;height:20px;background:#dcdcdc"></div>
<div style="position:absolute;left:1024px;top:208px;width:1px;height:20px;background:#dcdcdc"></div>
<div style="position:absolute;left:1059px;top:208px;width:1px;height:20px;background:#dcdcdc"></div>
<div style="position:absolute;left:1092px;top:208px;width:1px;height:20px;background:#dcdcdc"></div>
<svg style="position:absolute;left:826px;top:211px" width="12" height="14" viewBox="0 0 12 14"><polygon points="0,0 11,0 5.5,4.5" fill="#2d4f8e"/><rect x="0" y="5.8" width="12" height="2" fill="#2d4f8e"/><polygon points="1,14 11,14 6,9.5" fill="#2d4f8e"/></svg>
<svg style="position:absolute;left:861px;top:211px" width="12" height="14" viewBox="0 0 12 14"><polygon points="1,4.5 11,4.5 6,0" fill="#2d4f8e"/><rect x="0" y="5.5" width="12" height="1.5" fill="#2d4f8e"/><rect x="0" y="8" width="12" height="1.5" fill="#2d4f8e"/><polygon points="1,10 11,10 6,14" fill="#2d4f8e"/></svg>
<div style="position:absolute;left:890px;top:206px;width:24px;height:24px;background:#e6e6e6;border:1px solid #a8a8a8;box-sizing:border-box"></div>
<svg style="position:absolute;left:895px;top:211px" width="14" height="14" viewBox="0 0 14 14"><rect x="4" y="1.5" width="6" height="7" fill="#bbb" stroke="#333" stroke-width="1"/><path d="M1,4h3M1,7h3M10,4h3M10,7h3M7,8.5v5" stroke="#333" stroke-width="1.2"/><path d="M1.5,12 L12.5,1.5" stroke="#333" stroke-width="1.6"/></svg>
<svg style="position:absolute;left:930px;top:210px" width="18" height="19" viewBox="0 0 18 19"><rect x="0" y="5" width="4" height="5" fill="#2d4f8e"/><rect x="10" y="1" width="4" height="4.7" fill="#2d4f8e"/><rect x="10" y="10" width="4" height="4.8" fill="#2d4f8e"/><path d="M4,7.5 H6.5 V3.3 H10 M6.5,7.5 V12.3 H10" fill="none" stroke="#2d4f8e" stroke-width="1.1"/><polygon points="18,14 18,19 13,19" fill="#333"/></svg>
<svg style="position:absolute;left:965px;top:211px" width="14" height="14" viewBox="0 0 14 14"><path d="M2,12.2 L7.5,6.7" stroke="#bdbdbd" stroke-width="2.8" stroke-linecap="round"/><circle cx="9.8" cy="4.3" r="3.9" fill="#bdbdbd"/><polygon points="9.6,4.4 11,-0.5 14.8,3.2" fill="#fff"/></svg>
<svg style="position:absolute;left:1000px;top:211px" width="14" height="14" viewBox="0 0 14 14"><circle cx="9.6" cy="4.3" r="3.7" fill="none" stroke="#c0c0c0" stroke-width="1.3"/><circle cx="10.5" cy="3.4" r="0.9" fill="#c0c0c0"/><path d="M7,7 L1,13 M1,10.5 L3.5,13 M3,8.8 L4.6,10.4" stroke="#c0c0c0" stroke-width="1.3"/></svg>
<svg style="position:absolute;left:1035px;top:211px" width="14" height="14" viewBox="0 0 14 14"><rect x="3" y="3" width="8" height="8" fill="none" stroke="#c0c0c0" stroke-width="1.3"/><rect x="5.5" y="5.5" width="3" height="3" fill="#c0c0c0"/><path d="M5,0v3M9,0v3M5,11v3M9,11v3M0,5h3M0,9h3M11,5h3M11,9h3" stroke="#c0c0c0" stroke-width="1.2"/></svg>
<div style="position:absolute;left:1067px;top:211px;width:14px;height:14px;background:#8c8c8c"></div>
<svg style="position:absolute;left:2062px;top:211px" width="14" height="14" viewBox="0 0 14 14"><polygon points="6.31,0.03 7.69,0.03 8.51,2.02 9.45,2.41 11.44,1.59 12.41,2.56 11.59,4.55 11.98,5.49 13.97,6.31 13.97,7.69 11.98,8.51 11.59,9.45 12.41,11.44 11.44,12.41 9.45,11.59 8.51,11.98 7.69,13.97 6.31,13.97 5.49,11.98 4.55,11.59 2.56,12.41 1.59,11.44 2.41,9.45 2.02,8.51 0.03,7.69 0.03,6.31 2.02,5.49 2.41,4.55 1.59,2.56 2.56,1.59 4.55,2.41 5.49,2.02" fill="#2d4f8e"/><circle cx="7" cy="7" r="2.3" fill="#fff"/></svg>
<div style="position:absolute;left:780px;top:235px;width:1306px;height:37px;background:#fff"></div>
<div class="t" style="left:786px;top:247.63px;font-size:12.25px;color:#000;text-underline-offset:2px;"><u>S</u>earch:</div>
<div style="position:absolute;left:835px;top:241px;width:242px;height:26px;background:#fff;border:1px solid #b4b4b4;box-sizing:border-box"></div>
<svg style="position:absolute;left:841px;top:248px" width="14" height="11" viewBox="0 0 14 11"><circle cx="4.5" cy="4.5" r="3.4" fill="none" stroke="#8a8a8a" stroke-width="1.1"/><path d="M7,7 L9.5,9.5" stroke="#8a8a8a" stroke-width="1.4"/><path d="M10.5,5 L13,5 L11.8,6.5z" fill="#8a8a8a"/></svg>
<div style="position:absolute;left:2072px;top:272px;width:14px;height:24px;background:#fff"></div>
<div style="position:absolute;left:780px;top:272px;width:1292px;height:24px;background:#ebebeb"></div>
<div style="position:absolute;left:780px;top:272px;width:315px;height:24px;background:#c9c9c9"></div>
<div class="t" style="left:786px;top:278.13px;font-size:12.25px;color:#000;">Name</div>
<svg style="position:absolute;left:1074px;top:277px" width="9" height="6" viewBox="0 0 9 6"><path d="M0.8,5 L4.5,1 L8.2,5" fill="none" stroke="#444" stroke-width="1.5"/></svg>
<div class="t" style="left:1085px;top:278.38px;font-size:9px;color:#222;">1</div>
<div style="position:absolute;left:1095px;top:272px;width:1px;height:24px;background:#d6d6d6"></div>
<div class="t" style="left:1102px;top:278.13px;font-size:12.25px;color:#000;">AXI4</div>
<div style="position:absolute;left:1215px;top:272px;width:1px;height:24px;background:#d6d6d6"></div>
<div class="t" style="left:1222px;top:278.13px;font-size:12.25px;color:#000;">Status</div>
<div style="position:absolute;left:1306px;top:272px;width:1px;height:24px;background:#d6d6d6"></div>
<div class="t" style="left:1313px;top:278.13px;font-size:12.25px;color:#000;">License</div>
<div style="position:absolute;left:1372px;top:272px;width:1px;height:24px;background:#d6d6d6"></div>
<div class="t" style="left:1379px;top:278.13px;font-size:12.25px;color:#000;">VLNV</div>
<div style="position:absolute;left:1616px;top:272px;width:1px;height:24px;background:#d6d6d6"></div>
<div style="position:absolute;left:780px;top:296px;width:1292px;height:447px;background:#fff"></div>
<svg style="position:absolute;left:803px;top:304px" width="6" height="9" viewBox="0 0 6 9"><path d="M0.7,0.7 L5.3,4.5 L0.7,8.3" fill="none" stroke="#555" stroke-width="1.3"/></svg>
<svg style="position:absolute;left:819px;top:303px" width="12" height="10" viewBox="0 0 12 10"><path d="M0.5,9.5 V1 Q0.5,0.5 1,0.5 H4 L5,1.5 H10.5 V4" fill="#f4f4f4" stroke="#cfcfcf" stroke-width="1"/><path d="M2,4 H12 L10.5,10 H0.5z" fill="#cdcdcd"/></svg>
<div class="t" style="left:837px;top:301.63px;font-size:12.25px;color:#000;">Dynamic Function eXchange</div>
<div style="position:absolute;left:780px;top:320px;width:836px;height:1px;background:#e6e6e6"></div>
<svg style="position:absolute;left:803px;top:329px" width="6" height="9" viewBox="0 0 6 9"><path d="M0.7,0.7 L5.3,4.5 L0.7,8.3" fill="none" stroke="#555" stroke-width="1.3"/></svg>
<svg style="position:absolute;left:819px;top:328px" width="12" height="10" viewBox="0 0 12 10"><path d="M0.5,9.5 V1 Q0.5,0.5 1,0.5 H4 L5,1.5 H10.5 V4" fill="#f4f4f4" stroke="#cfcfcf" stroke-width="1"/><path d="M2,4 H12 L10.5,10 H0.5z" fill="#cdcdcd"/></svg>
<div class="t" style="left:837px;top:326.63px;font-size:12.25px;color:#000;">Embedded Processing</div>
<div style="position:absolute;left:780px;top:345px;width:836px;height:1px;background:#e6e6e6"></div>
<svg style="position:absolute;left:803px;top:354px" width="6" height="9" viewBox="0 0 6 9"><path d="M0.7,0.7 L5.3,4.5 L0.7,8.3" fill="none" stroke="#555" stroke-width="1.3"/></svg>
<svg style="position:absolute;left:819px;top:353px" width="12" height="10" viewBox="0 0 12 10"><path d="M0.5,9.5 V1 Q0.5,0.5 1,0.5 H4 L5,1.5 H10.5 V4" fill="#f4f4f4" stroke="#cfcfcf" stroke-width="1"/><path d="M2,4 H12 L10.5,10 H0.5z" fill="#cdcdcd"/></svg>
<div class="t" style="left:837px;top:351.63px;font-size:12.25px;color:#000;">FPGA Features and Design</div>
<div style="position:absolute;left:780px;top:370px;width:836px;height:1px;background:#e6e6e6"></div>
<svg style="position:absolute;left:803px;top:379px" width="6" height="9" viewBox="0 0 6 9"><path d="M0.7,0.7 L5.3,4.5 L0.7,8.3" fill="none" stroke="#555" stroke-width="1.3"/></svg>
<svg style="position:absolute;left:819px;top:378px" width="12" height="10" viewBox="0 0 12 10"><path d="M0.5,9.5 V1 Q0.5,0.5 1,0.5 H4 L5,1.5 H10.5 V4" fill="#f4f4f4" stroke="#cfcfcf" stroke-width="1"/><path d="M2,4 H12 L10.5,10 H0.5z" fill="#cdcdcd"/></svg>
<div class="t" style="left:837px;top:376.63px;font-size:12.25px;color:#000;">Kernels</div>
<div style="position:absolute;left:780px;top:395px;width:836px;height:1px;background:#e6e6e6"></div>
<svg style="position:absolute;left:801px;top:406px" width="9" height="5" viewBox="0 0 9 5"><path d="M0.7,0.7 L4.5,4.3 L8.3,0.7" fill="none" stroke="#555" stroke-width="1.3"/></svg>
<svg style="position:absolute;left:819px;top:403px" width="12" height="10" viewBox="0 0 12 10"><path d="M0.5,9.5 V1 Q0.5,0.5 1,0.5 H4 L5,1.5 H10.5 V4" fill="#f4f4f4" stroke="#cfcfcf" stroke-width="1"/><path d="M2,4 H12 L10.5,10 H0.5z" fill="#cdcdcd"/></svg>
<div class="t" style="left:837px;top:401.63px;font-size:12.25px;color:#000;">Math Functions</div>
<div style="position:absolute;left:780px;top:420px;width:836px;height:1px;background:#e6e6e6"></div>
<svg style="position:absolute;left:819px;top:429px" width="6" height="9" viewBox="0 0 6 9"><path d="M0.7,0.7 L5.3,4.5 L0.7,8.3" fill="none" stroke="#555" stroke-width="1.3"/></svg>
<svg style="position:absolute;left:835px;top:428px" width="12" height="10" viewBox="0 0 12 10"><path d="M0.5,9.5 V1 Q0.5,0.5 1,0.5 H4 L5,1.5 H10.5 V4" fill="#f4f4f4" stroke="#cfcfcf" stroke-width="1"/><path d="M2,4 H12 L10.5,10 H0.5z" fill="#cdcdcd"/></svg>
<div class="t" style="left:853px;top:426.63px;font-size:12.25px;color:#000;">Adders &amp; Subtracters</div>
<div style="position:absolute;left:780px;top:445px;width:836px;height:1px;background:#e6e6e6"></div>
<svg style="position:absolute;left:819px;top:454px" width="6" height="9" viewBox="0 0 6 9"><path d="M0.7,0.7 L5.3,4.5 L0.7,8.3" fill="none" stroke="#555" stroke-width="1.3"/></svg>
<svg style="position:absolute;left:835px;top:453px" width="12" height="10" viewBox="0 0 12 10"><path d="M0.5,9.5 V1 Q0.5,0.5 1,0.5 H4 L5,1.5 H10.5 V4" fill="#f4f4f4" stroke="#cfcfcf" stroke-width="1"/><path d="M2,4 H12 L10.5,10 H0.5z" fill="#cdcdcd"/></svg>
<div class="t" style="left:853px;top:451.63px;font-size:12.25px;color:#000;">Conversions</div>
<div style="position:absolute;left:780px;top:470px;width:836px;height:1px;background:#e6e6e6"></div>
<svg style="position:absolute;left:819px;top:479px" width="6" height="9" viewBox="0 0 6 9"><path d="M0.7,0.7 L5.3,4.5 L0.7,8.3" fill="none" stroke="#555" stroke-width="1.3"/></svg>
<svg style="position:absolute;left:835px;top:478px" width="12" height="10" viewBox="0 0 12 10"><path d="M0.5,9.5 V1 Q0.5,0.5 1,0.5 H4 L5,1.5 H10.5 V4" fill="#f4f4f4" stroke="#cfcfcf" stroke-width="1"/><path d="M2,4 H12 L10.5,10 H0.5z" fill="#cdcdcd"/></svg>
<div class="t" style="left:853px;top:476.63px;font-size:12.25px;color:#000;">CORDIC</div>
<div style="position:absolute;left:780px;top:495px;width:836px;height:1px;background:#e6e6e6"></div>
<svg style="position:absolute;left:817px;top:506px" width="9" height="5" viewBox="0 0 9 5"><path d="M0.7,0.7 L4.5,4.3 L8.3,0.7" fill="none" stroke="#555" stroke-width="1.3"/></svg>
<svg style="position:absolute;left:835px;top:503px" width="12" height="10" viewBox="0 0 12 10"><path d="M0.5,9.5 V1 Q0.5,0.5 1,0.5 H4 L5,1.5 H10.5 V4" fill="#f4f4f4" stroke="#cfcfcf" stroke-width="1"/><path d="M2,4 H12 L10.5,10 H0.5z" fill="#cdcdcd"/></svg>
<div class="t" style="left:853px;top:501.63px;font-size:12.25px;color:#000;">Dividers</div>
<div style="position:absolute;left:780px;top:520px;width:836px;height:1px;background:#e6e6e6"></div>
<svg style="position:absolute;left:851px;top:527px" width="12" height="13" viewBox="0 0 12 13"><rect x="3.5" y="0.5" width="5.5" height="7.5" fill="#fbad2a" stroke="#9a9a9a" stroke-width="1"/><path d="M0,2.5h3M0,5.5h3M9.5,2.5h3M9.5,5.5h3M6,8v4" stroke="#9a9a9a" stroke-width="1.1"/></svg>
<div class="t" style="left:869px;top:526.63px;font-size:12.25px;color:#000;">Divider Generator</div>
<div class="t" style="left:1103px;top:526.63px;font-size:12.25px;color:#000;">AXI4-Stream</div>
<div class="t" style="left:1223px;top:526.63px;font-size:12.25px;color:#000;">Production</div>
<div class="t" style="left:1314px;top:526.63px;font-size:12.25px;color:#000;">Included</div>
<div class="t" style="left:1379px;top:526.63px;font-size:12.25px;color:#000;">xilinx.com:ip:div_gen:5.1</div>
<div style="position:absolute;left:1095px;top:521px;width:1px;height:25px;background:#e6e6e6"></div>
<div style="position:absolute;left:1215px;top:521px;width:1px;height:25px;background:#e6e6e6"></div>
<div style="position:absolute;left:1306px;top:521px;width:1px;height:25px;background:#e6e6e6"></div>
<div style="position:absolute;left:1372px;top:521px;width:1px;height:25px;background:#e6e6e6"></div>
<div style="position:absolute;left:780px;top:545px;width:836px;height:1px;background:#e6e6e6"></div>
<svg style="position:absolute;left:819px;top:554px" width="6" height="9" viewBox="0 0 6 9"><path d="M0.7,0.7 L5.3,4.5 L0.7,8.3" fill="none" stroke="#555" stroke-width="1.3"/></svg>
<svg style="position:absolute;left:835px;top:553px" width="12" height="10" viewBox="0 0 12 10"><path d="M0.5,9.5 V1 Q0.5,0.5 1,0.5 H4 L5,1.5 H10.5 V4" fill="#f4f4f4" stroke="#cfcfcf" stroke-width="1"/><path d="M2,4 H12 L10.5,10 H0.5z" fill="#cdcdcd"/></svg>
<div class="t" style="left:853px;top:551.63px;font-size:12.25px;color:#000;">Floating Point</div>
<div style="position:absolute;left:780px;top:570px;width:836px;height:1px;background:#e6e6e6"></div>
<svg style="position:absolute;left:817px;top:581px" width="9" height="5" viewBox="0 0 9 5"><path d="M0.7,0.7 L4.5,4.3 L8.3,0.7" fill="none" stroke="#555" stroke-width="1.3"/></svg>
<svg style="position:absolute;left:835px;top:578px" width="12" height="10" viewBox="0 0 12 10"><path d="M0.5,9.5 V1 Q0.5,0.5 1,0.5 H4 L5,1.5 H10.5 V4" fill="#f4f4f4" stroke="#cfcfcf" stroke-width="1"/><path d="M2,4 H12 L10.5,10 H0.5z" fill="#cdcdcd"/></svg>
<div class="t" style="left:853px;top:576.63px;font-size:12.25px;color:#000;">Multipliers</div>
<div style="position:absolute;left:780px;top:595px;width:836px;height:1px;background:#e6e6e6"></div>
<svg style="position:absolute;left:851px;top:602px" width="12" height="13" viewBox="0 0 12 13"><rect x="3.5" y="0.5" width="5.5" height="7.5" fill="#fbad2a" stroke="#9a9a9a" stroke-width="1"/><path d="M0,2.5h3M0,5.5h3M9.5,2.5h3M9.5,5.5h3M6,8v4" stroke="#9a9a9a" stroke-width="1.1"/></svg>
<div class="t" style="left:869px;top:601.63px;font-size:12.25px;color:#000;">Complex Multiplier</div>
<div class="t" style="left:1103px;top:601.63px;font-size:12.25px;color:#000;">AXI4-Stream</div>
<div class="t" style="left:1223px;top:601.63px;font-size:12.25px;color:#000;">Production</div>
<div class="t" style="left:1314px;top:601.63px;font-size:12.25px;color:#000;">Included</div>
<div class="t" style="left:1379px;top:601.63px;font-size:12.25px;color:#000;">xilinx.com:ip:cmpy:6.0</div>
<div style="position:absolute;left:1095px;top:596px;width:1px;height:25px;background:#e6e6e6"></div>
<div style="position:absolute;left:1215px;top:596px;width:1px;height:25px;background:#e6e6e6"></div>
<div style="position:absolute;left:1306px;top:596px;width:1px;height:25px;background:#e6e6e6"></div>
<div style="position:absolute;left:1372px;top:596px;width:1px;height:25px;background:#e6e6e6"></div>
<div style="position:absolute;left:780px;top:620px;width:836px;height:1px;background:#e6e6e6"></div>
<svg style="position:absolute;left:851px;top:627px" width="12" height="13" viewBox="0 0 12 13"><rect x="3.5" y="0.5" width="5.5" height="7.5" fill="#fbad2a" stroke="#9a9a9a" stroke-width="1"/><path d="M0,2.5h3M0,5.5h3M9.5,2.5h3M9.5,5.5h3M6,8v4" stroke="#9a9a9a" stroke-width="1.1"/></svg>
<div class="t" style="left:869px;top:626.63px;font-size:12.25px;color:#000;">Multiplier</div>
<div class="t" style="left:1103px;top:626.63px;font-size:12.25px;color:#000;"></div>
<div class="t" style="left:1223px;top:626.63px;font-size:12.25px;color:#000;">Production</div>
<div class="t" style="left:1314px;top:626.63px;font-size:12.25px;color:#000;">Included</div>
<div class="t" style="left:1379px;top:626.63px;font-size:12.25px;color:#000;">xilinx.com:ip:mult_gen:12.0</div>
<div style="position:absolute;left:1095px;top:621px;width:1px;height:25px;background:#e6e6e6"></div>
<div style="position:absolute;left:1215px;top:621px;width:1px;height:25px;background:#e6e6e6"></div>
<div style="position:absolute;left:1306px;top:621px;width:1px;height:25px;background:#e6e6e6"></div>
<div style="position:absolute;left:1372px;top:621px;width:1px;height:25px;background:#e6e6e6"></div>
<div style="position:absolute;left:780px;top:645px;width:836px;height:1px;background:#e6e6e6"></div>
<svg style="position:absolute;left:819px;top:654px" width="6" height="9" viewBox="0 0 6 9"><path d="M0.7,0.7 L5.3,4.5 L0.7,8.3" fill="none" stroke="#555" stroke-width="1.3"/></svg>
<svg style="position:absolute;left:835px;top:653px" width="12" height="10" viewBox="0 0 12 10"><path d="M0.5,9.5 V1 Q0.5,0.5 1,0.5 H4 L5,1.5 H10.5 V4" fill="#f4f4f4" stroke="#cfcfcf" stroke-width="1"/><path d="M2,4 H12 L10.5,10 H0.5z" fill="#cdcdcd"/></svg>
<div class="t" style="left:853px;top:651.63px;font-size:12.25px;color:#000;">Square Root</div>
<div style="position:absolute;left:780px;top:670px;width:836px;height:1px;background:#e6e6e6"></div>
<svg style="position:absolute;left:819px;top:679px" width="6" height="9" viewBox="0 0 6 9"><path d="M0.7,0.7 L5.3,4.5 L0.7,8.3" fill="none" stroke="#555" stroke-width="1.3"/></svg>
<svg style="position:absolute;left:835px;top:678px" width="12" height="10" viewBox="0 0 12 10"><path d="M0.5,9.5 V1 Q0.5,0.5 1,0.5 H4 L5,1.5 H10.5 V4" fill="#f4f4f4" stroke="#cfcfcf" stroke-width="1"/><path d="M2,4 H12 L10.5,10 H0.5z" fill="#cdcdcd"/></svg>
<div class="t" style="left:853px;top:676.63px;font-size:12.25px;color:#000;">Trig Functions</div>
<div style="position:absolute;left:780px;top:695px;width:836px;height:1px;background:#e6e6e6"></div>
<svg style="position:absolute;left:803px;top:704px" width="6" height="9" viewBox="0 0 6 9"><path d="M0.7,0.7 L5.3,4.5 L0.7,8.3" fill="none" stroke="#555" stroke-width="1.3"/></svg>
<svg style="position:absolute;left:819px;top:703px" width="12" height="10" viewBox="0 0 12 10"><path d="M0.5,9.5 V1 Q0.5,0.5 1,0.5 H4 L5,1.5 H10.5 V4" fill="#f4f4f4" stroke="#cfcfcf" stroke-width="1"/><path d="M2,4 H12 L10.5,10 H0.5z" fill="#cdcdcd"/></svg>
<div class="t" style="left:837px;top:701.63px;font-size:12.25px;color:#000;">Memories &amp; Storage Elements</div>
<div style="position:absolute;left:780px;top:720px;width:836px;height:1px;background:#e6e6e6"></div>
<svg style="position:absolute;left:803px;top:729px" width="6" height="9" viewBox="0 0 6 9"><path d="M0.7,0.7 L5.3,4.5 L0.7,8.3" fill="none" stroke="#555" stroke-width="1.3"/></svg>
<svg style="position:absolute;left:819px;top:728px" width="12" height="10" viewBox="0 0 12 10"><path d="M0.5,9.5 V1 Q0.5,0.5 1,0.5 H4 L5,1.5 H10.5 V4" fill="#f4f4f4" stroke="#cfcfcf" stroke-width="1"/><path d="M2,4 H12 L10.5,10 H0.5z" fill="#cdcdcd"/></svg>
<div class="t" style="left:837px;top:726.63px;font-size:12.25px;color:#000;">Partial Reconfiguration</div>
<div style="position:absolute;left:780px;top:745px;width:836px;height:1px;background:#e6e6e6"></div>
<div style="position:absolute;left:1616px;top:296px;width:1px;height:447px;background:#e6e6e6"></div>
<div style="position:absolute;left:2072px;top:296px;width:14px;height:447px;background:#f8f8f8;border-left:1px solid #e6e6e6;box-sizing:border-box"></div>
<svg style="position:absolute;left:2075px;top:301px" width="10" height="6" viewBox="0 0 10 6"><path d="M0.8,5.2 L5,1 L9.2,5.2" fill="none" stroke="#666" stroke-width="1.8"/></svg>
<div style="position:absolute;left:2075px;top:457px;width:8px;height:209px;background:#bdbdbd;border-radius:4px"></div>
<svg style="position:absolute;left:2075px;top:734px" width="10" height="6" viewBox="0 0 10 6"><path d="M0.8,0.8 L5,5 L9.2,0.8" fill="none" stroke="#666" stroke-width="1.8"/></svg>
<div style="position:absolute;left:780px;top:743px;width:1306px;height:11px;background:#fff"></div>
<div style="position:absolute;left:780px;top:754px;width:1306px;height:32px;background:#ebebeb"></div>
<div class="t" style="left:795px;top:764.93px;font-size:11.9px;font-weight:bold;color:#000;">Details</div>
<div style="position:absolute;left:780px;top:786px;width:1306px;height:215px;background:#fff"></div>
<div class="t" style="left:1292px;top:888.76px;font-size:12.1px;color:#808080;">Select an IP or Interface or Repository to see details</div>
<div style="position:absolute;left:255px;top:1017px;width:1834px;height:249px;border:1px solid #c9c9c9;box-sizing:border-box;background:#e8e8e8"></div>
<div style="position:absolute;left:346px;top:1020px;width:1px;height:25px;background:#cfcfcf"></div>
<div style="position:absolute;left:427px;top:1020px;width:1px;height:25px;background:#cfcfcf"></div>
<div style="position:absolute;left:470px;top:1020px;width:1px;height:25px;background:#cfcfcf"></div>
<div style="position:absolute;left:538px;top:1020px;width:1px;height:25px;background:#cfcfcf"></div>
<div class="t" style="left:264px;top:1028.93px;font-size:11.9px;font-weight:bold;color:#8a8a8a;">Tcl Console</div>
<div class="t" style="left:353px;top:1028.93px;font-size:11.9px;font-weight:bold;color:#8a8a8a;">Messages</div>
<div class="t" style="left:434px;top:1028.93px;font-size:11.9px;font-weight:bold;color:#8a8a8a;">Log</div>
<div class="t" style="left:477px;top:1028.93px;font-size:11.9px;font-weight:bold;color:#8a8a8a;">Reports</div>
<div style="position:absolute;left:539px;top:1020px;width:115px;height:31px;background:#fff"></div>
<div class="t" style="left:545px;top:1028.93px;font-size:11.9px;font-weight:bold;color:#000;">Design Runs</div>
<svg style="position:absolute;left:640px;top:1032px" width="8" height="8" viewBox="0 0 8 8"><path d="M0.6,0.6 L7.4,7.4 M7.4,0.6 L0.6,7.4" stroke="#666" stroke-width="1.2"/></svg>
<svg style="position:absolute;left:2007.5px;top:1031px" width="9" height="10" viewBox="0 0 9 10"><path d="M1.2,3.2 C1.2,0 7.8,0 7.8,3 C7.8,5.3 4.5,5 4.5,7.2" fill="none" stroke="#8e8e8e" stroke-width="1.9"/><rect x="3.5" y="8.3" width="2" height="1.7" fill="#8e8e8e"/></svg>
<div style="position:absolute;left:2027px;top:1039px;width:10px;height:2px;background:#8e8e8e"></div>
<div style="position:absolute;left:2047px;top:1031px;width:10px;height:10px;border:2px solid #8e8e8e;box-sizing:border-box"></div>
<svg style="position:absolute;left:2067px;top:1031px" width="10" height="10" viewBox="0 0 10 10"><path d="M4.5,1 L1,1 L1,9 L9,9 L9,5" fill="none" stroke="#8e8e8e" stroke-width="2"/><path d="M5,5 L9,1 M7,1 L9.5,0.5 L9,3" fill="none" stroke="#8e8e8e" stroke-width="1.5"/></svg>
<div style="position:absolute;left:258px;top:1050px;width:1828px;height:33px;background:#fff"></div>
<svg style="position:absolute;left:268px;top:1059px" width="14" height="14" viewBox="0 0 14 14"><circle cx="6" cy="6" r="5.1" fill="none" stroke="#2d4f8e" stroke-width="1.8"/><path d="M10.3,10.3 L12.6,12.6" stroke="#2d4f8e" stroke-width="2.6" stroke-linecap="round"/></svg>
<svg style="position:absolute;left:304px;top:1060px" width="12" height="14" viewBox="0 0 12 14"><polygon points="0,0 11,0 5.5,4.5" fill="#2d4f8e"/><rect x="0" y="5.8" width="12" height="2" fill="#2d4f8e"/><polygon points="1,14 11,14 6,9.5" fill="#2d4f8e"/></svg>
<svg style="position:absolute;left:339px;top:1060px" width="12" height="14" viewBox="0 0 12 14"><polygon points="1,4.5 11,4.5 6,0" fill="#2d4f8e"/><rect x="0" y="5.5" width="12" height="1.5" fill="#2d4f8e"/><rect x="0" y="8" width="12" height="1.5" fill="#2d4f8e"/><polygon points="1,10 11,10 6,14" fill="#2d4f8e"/></svg>
<div style="position:absolute;left:292px;top:1055px;width:1px;height:21px;background:#dcdcdc"></div>
<div style="position:absolute;left:327px;top:1055px;width:1px;height:21px;background:#dcdcdc"></div>
<div style="position:absolute;left:362px;top:1055px;width:1px;height:21px;background:#dcdcdc"></div>
<div style="position:absolute;left:397px;top:1055px;width:1px;height:21px;background:#dcdcdc"></div>
<div style="position:absolute;left:432px;top:1055px;width:1px;height:21px;background:#dcdcdc"></div>
<div style="position:absolute;left:467px;top:1055px;width:1px;height:21px;background:#dcdcdc"></div>
<div style="position:absolute;left:502px;top:1055px;width:1px;height:21px;background:#dcdcdc"></div>
<div style="position:absolute;left:537px;top:1055px;width:1px;height:21px;background:#dcdcdc"></div>
<div style="position:absolute;left:572px;top:1055px;width:1px;height:21px;background:#dcdcdc"></div>
<svg style="position:absolute;left:374px;top:1059px" width="12" height="13" viewBox="0 0 12 13"><rect x="0" y="0" width="2.2" height="13" fill="#bdbdbd"/><polygon points="12,0 12,13 3,6.5" fill="#bdbdbd"/></svg>
<svg style="position:absolute;left:408px;top:1059px" width="14" height="13" viewBox="0 0 14 13"><path d="M7,1 L2,6.5 L7,12 M12.5,1 L7.5,6.5 L12.5,12" fill="none" stroke="#bdbdbd" stroke-width="1.8"/></svg>
<svg style="position:absolute;left:443px;top:1058px" width="13" height="14" viewBox="0 0 13 14"><polygon points="1,0 12,7 1,14" fill="#bdbdbd"/></svg>
<svg style="position:absolute;left:478px;top:1059px" width="14" height="13" viewBox="0 0 14 13"><path d="M1.5,1 L6.5,6.5 L1.5,12 M7,1 L12,6.5 L7,12" fill="none" stroke="#bdbdbd" stroke-width="1.8"/></svg>
<svg style="position:absolute;left:513px;top:1059px" width="14" height="14" viewBox="0 0 14 14"><path d="M7,0 V14 M0,7 H14" stroke="#2d4f8e" stroke-width="3"/></svg>
<div class="t" style="left:548px;top:1058.46px;font-size:16px;color:#2d4f8e;">%</div>
<div style="position:absolute;left:258px;top:1083px;width:1828px;height:25px;background:#ebebeb"></div>
<div class="t" style="left:265px;top:1089.63px;font-size:12.25px;color:#000;">Name</div>
<div style="position:absolute;left:439px;top:1083px;width:1px;height:25px;background:#d6d6d6"></div>
<div class="t" style="left:446px;top:1089.63px;font-size:12.25px;color:#000;">Constraints</div>
<div style="position:absolute;left:520px;top:1083px;width:1px;height:25px;background:#d6d6d6"></div>
<div class="t" style="left:527px;top:1089.63px;font-size:12.25px;color:#000;">Status</div>
<div style="position:absolute;left:680px;top:1083px;width:1px;height:25px;background:#d6d6d6"></div>
<div class="t" style="left:687px;top:1089.63px;font-size:12.25px;color:#000;">WNS</div>
<div style="position:absolute;left:726px;top:1083px;width:1px;height:25px;background:#d6d6d6"></div>
<div class="t" style="left:733px;top:1089.63px;font-size:12.25px;color:#000;">TNS</div>
<div style="position:absolute;left:768px;top:1083px;width:1px;height:25px;background:#d6d6d6"></div>
<div class="t" style="left:775px;top:1089.63px;font-size:12.25px;color:#000;">WHS</div>
<div style="position:absolute;left:814px;top:1083px;width:1px;height:25px;background:#d6d6d6"></div>
<div class="t" style="left:821px;top:1089.63px;font-size:12.25px;color:#000;">THS</div>
<div style="position:absolute;left:856px;top:1083px;width:1px;height:25px;background:#d6d6d6"></div>
<div class="t" style="left:863px;top:1089.63px;font-size:12.25px;color:#000;">TPWS</div>
<div style="position:absolute;left:908px;top:1083px;width:1px;height:25px;background:#d6d6d6"></div>
<div class="t" style="left:915px;top:1089.63px;font-size:12.25px;color:#000;">Total Power</div>
<div style="position:absolute;left:991px;top:1083px;width:1px;height:25px;background:#d6d6d6"></div>
<div class="t" style="left:998px;top:1089.63px;font-size:12.25px;color:#000;">Failed Routes</div>
<div style="position:absolute;left:1085px;top:1083px;width:1px;height:25px;background:#d6d6d6"></div>
<div class="t" style="left:1092px;top:1089.63px;font-size:12.25px;color:#000;">LUT</div>
<div style="position:absolute;left:1126px;top:1083px;width:1px;height:25px;background:#d6d6d6"></div>
<div class="t" style="left:1133px;top:1089.63px;font-size:12.25px;color:#000;">FF</div>
<div style="position:absolute;left:1158px;top:1083px;width:1px;height:25px;background:#d6d6d6"></div>
<div class="t" style="left:1165px;top:1089.63px;font-size:12.25px;color:#000;">BRAM</div>
<div style="position:absolute;left:1211px;top:1083px;width:1px;height:25px;background:#d6d6d6"></div>
<div class="t" style="left:1218px;top:1089.63px;font-size:12.25px;color:#000;">URAM</div>
<div style="position:absolute;left:1265px;top:1083px;width:1px;height:25px;background:#d6d6d6"></div>
<div class="t" style="left:1272px;top:1089.63px;font-size:12.25px;color:#000;">DSP</div>
<div style="position:absolute;left:1308px;top:1083px;width:1px;height:25px;background:#d6d6d6"></div>
<div class="t" style="left:1315px;top:1089.63px;font-size:12.25px;color:#000;">Start</div>
<div style="position:absolute;left:1351px;top:1083px;width:1px;height:25px;background:#d6d6d6"></div>
<div class="t" style="left:1358px;top:1089.63px;font-size:12.25px;color:#000;">Elapsed</div>
<div style="position:absolute;left:1415px;top:1083px;width:1px;height:25px;background:#d6d6d6"></div>
<div class="t" style="left:1422px;top:1089.63px;font-size:12.25px;color:#000;">Run Strategy</div>
<div style="position:absolute;left:1774px;top:1083px;width:1px;height:25px;background:#d6d6d6"></div>
<div class="t" style="left:1781px;top:1089.63px;font-size:12.25px;color:#000;">Report Strategy</div>
<div style="position:absolute;left:258px;top:1108px;width:1828px;height:140px;background:#fff"></div>
<div style="position:absolute;left:439px;top:1108px;width:1px;height:25px;background:#e4e4e4"></div>
<div style="position:absolute;left:520px;top:1108px;width:1px;height:25px;background:#e4e4e4"></div>
<div style="position:absolute;left:680px;top:1108px;width:1px;height:25px;background:#e4e4e4"></div>
<div style="position:absolute;left:726px;top:1108px;width:1px;height:25px;background:#e4e4e4"></div>
<div style="position:absolute;left:768px;top:1108px;width:1px;height:25px;background:#e4e4e4"></div>
<div style="position:absolute;left:814px;top:1108px;width:1px;height:25px;background:#e4e4e4"></div>
<div style="position:absolute;left:856px;top:1108px;width:1px;height:25px;background:#e4e4e4"></div>
<div style="position:absolute;left:908px;top:1108px;width:1px;height:25px;background:#e4e4e4"></div>
<div style="position:absolute;left:991px;top:1108px;width:1px;height:25px;background:#e4e4e4"></div>
<div style="position:absolute;left:1085px;top:1108px;width:1px;height:25px;background:#e4e4e4"></div>
<div style="position:absolute;left:1126px;top:1108px;width:1px;height:25px;background:#e4e4e4"></div>
<div style="position:absolute;left:1158px;top:1108px;width:1px;height:25px;background:#e4e4e4"></div>
<div style="position:absolute;left:1211px;top:1108px;width:1px;height:25px;background:#e4e4e4"></div>
<div style="position:absolute;left:1265px;top:1108px;width:1px;height:25px;background:#e4e4e4"></div>
<div style="position:absolute;left:1308px;top:1108px;width:1px;height:25px;background:#e4e4e4"></div>
<div style="position:absolute;left:1351px;top:1108px;width:1px;height:25px;background:#e4e4e4"></div>
<div style="position:absolute;left:1415px;top:1108px;width:1px;height:25px;background:#e4e4e4"></div>
<div style="position:absolute;left:1774px;top:1108px;width:1px;height:25px;background:#e4e4e4"></div>
<div style="position:absolute;left:258px;top:1132px;width:1828px;height:1px;background:#e4e4e4"></div>
<div style="position:absolute;left:439px;top:1133px;width:1px;height:25px;background:#e4e4e4"></div>
<div style="position:absolute;left:520px;top:1133px;width:1px;height:25px;background:#e4e4e4"></div>
<div style="position:absolute;left:680px;top:1133px;width:1px;height:25px;background:#e4e4e4"></div>
<div style="position:absolute;left:726px;top:1133px;width:1px;height:25px;background:#e4e4e4"></div>
<div style="position:absolute;left:768px;top:1133px;width:1px;height:25px;background:#e4e4e4"></div>
<div style="position:absolute;left:814px;top:1133px;width:1px;height:25px;background:#e4e4e4"></div>
<div style="position:absolute;left:856px;top:1133px;width:1px;height:25px;background:#e4e4e4"></div>
<div style="position:absolute;left:908px;top:1133px;width:1px;height:25px;background:#e4e4e4"></div>
<div style="position:absolute;left:991px;top:1133px;width:1px;height:25px;background:#e4e4e4"></div>
<div style="position:absolute;left:1085px;top:1133px;width:1px;height:25px;background:#e4e4e4"></div>
<div style="position:absolute;left:1126px;top:1133px;width:1px;height:25px;background:#e4e4e4"></div>
<div style="position:absolute;left:1158px;top:1133px;width:1px;height:25px;background:#e4e4e4"></div>
<div style="position:absolute;left:1211px;top:1133px;width:1px;height:25px;background:#e4e4e4"></div>
<div style="position:absolute;left:1265px;top:1133px;width:1px;height:25px;background:#e4e4e4"></div>
<div style="position:absolute;left:1308px;top:1133px;width:1px;height:25px;background:#e4e4e4"></div>
<div style="position:absolute;left:1351px;top:1133px;width:1px;height:25px;background:#e4e4e4"></div>
<div style="position:absolute;left:1415px;top:1133px;width:1px;height:25px;background:#e4e4e4"></div>
<div style="position:absolute;left:1774px;top:1133px;width:1px;height:25px;background:#e4e4e4"></div>
<div style="position:absolute;left:258px;top:1157px;width:1828px;height:1px;background:#e4e4e4"></div>
<div style="position:absolute;left:258px;top:1182px;width:1828px;height:1px;background:#e4e4e4"></div>
<div style="position:absolute;left:439px;top:1183px;width:1px;height:25px;background:#e4e4e4"></div>
<div style="position:absolute;left:520px;top:1183px;width:1px;height:25px;background:#e4e4e4"></div>
<div style="position:absolute;left:680px;top:1183px;width:1px;height:25px;background:#e4e4e4"></div>
<div style="position:absolute;left:726px;top:1183px;width:1px;height:25px;background:#e4e4e4"></div>
<div style="position:absolute;left:768px;top:1183px;width:1px;height:25px;background:#e4e4e4"></div>
<div style="position:absolute;left:814px;top:1183px;width:1px;height:25px;background:#e4e4e4"></div>
<div style="position:absolute;left:856px;top:1183px;width:1px;height:25px;background:#e4e4e4"></div>
<div style="position:absolute;left:908px;top:1183px;width:1px;height:25px;background:#e4e4e4"></div>
<div style="position:absolute;left:991px;top:1183px;width:1px;height:25px;background:#e4e4e4"></div>
<div style="position:absolute;left:1085px;top:1183px;width:1px;height:25px;background:#e4e4e4"></div>
<div style="position:absolute;left:1126px;top:1183px;width:1px;height:25px;background:#e4e4e4"></div>
<div style="position:absolute;left:1158px;top:1183px;width:1px;height:25px;background:#e4e4e4"></div>
<div style="position:absolute;left:1211px;top:1183px;width:1px;height:25px;background:#e4e4e4"></div>
<div style="position:absolute;left:1265px;top:1183px;width:1px;height:25px;background:#e4e4e4"></div>
<div style="position:absolute;left:1308px;top:1183px;width:1px;height:25px;background:#e4e4e4"></div>
<div style="position:absolute;left:1351px;top:1183px;width:1px;height:25px;background:#e4e4e4"></div>
<div style="position:absolute;left:1415px;top:1183px;width:1px;height:25px;background:#e4e4e4"></div>
<div style="position:absolute;left:1774px;top:1183px;width:1px;height:25px;background:#e4e4e4"></div>
<div style="position:absolute;left:258px;top:1207px;width:1828px;height:1px;background:#e4e4e4"></div>
<div style="position:absolute;left:439px;top:1208px;width:1px;height:25px;background:#e4e4e4"></div>
<div style="position:absolute;left:520px;top:1208px;width:1px;height:25px;background:#e4e4e4"></div>
<div style="position:absolute;left:680px;top:1208px;width:1px;height:25px;background:#e4e4e4"></div>
<div style="position:absolute;left:726px;top:1208px;width:1px;height:25px;background:#e4e4e4"></div>
<div style="position:absolute;left:768px;top:1208px;width:1px;height:25px;background:#e4e4e4"></div>
<div style="position:absolute;left:814px;top:1208px;width:1px;height:25px;background:#e4e4e4"></div>
<div style="position:absolute;left:856px;top:1208px;width:1px;height:25px;background:#e4e4e4"></div>
<div style="position:absolute;left:908px;top:1208px;width:1px;height:25px;background:#e4e4e4"></div>
<div style="position:absolute;left:991px;top:1208px;width:1px;height:25px;background:#e4e4e4"></div>
<div style="position:absolute;left:1085px;top:1208px;width:1px;height:25px;background:#e4e4e4"></div>
<div style="position:absolute;left:1126px;top:1208px;width:1px;height:25px;background:#e4e4e4"></div>
<div style="position:absolute;left:1158px;top:1208px;width:1px;height:25px;background:#e4e4e4"></div>
<div style="position:absolute;left:1211px;top:1208px;width:1px;height:25px;background:#e4e4e4"></div>
<div style="position:absolute;left:1265px;top:1208px;width:1px;height:25px;background:#e4e4e4"></div>
<div style="position:absolute;left:1308px;top:1208px;width:1px;height:25px;background:#e4e4e4"></div>
<div style="position:absolute;left:1351px;top:1208px;width:1px;height:25px;background:#e4e4e4"></div>
<div style="position:absolute;left:1415px;top:1208px;width:1px;height:25px;background:#e4e4e4"></div>
<div style="position:absolute;left:1774px;top:1208px;width:1px;height:25px;background:#e4e4e4"></div>
<div style="position:absolute;left:258px;top:1232px;width:1828px;height:1px;background:#e4e4e4"></div>
<svg style="position:absolute;left:264px;top:1117px" width="9" height="5" viewBox="0 0 9 5"><path d="M0.7,0.7 L4.5,4.3 L8.3,0.7" fill="none" stroke="#444" stroke-width="1.2"/></svg>
<svg style="position:absolute;left:281px;top:1114px" width="10" height="12" viewBox="0 0 10 12"><polygon points="1,1 9,6 1,11" fill="none" stroke="#9a9a9a" stroke-width="1.1"/></svg>
<div class="t" style="left:299px;top:1114.93px;font-size:11.9px;font-weight:bold;color:#000;">synth_1</div>
<div class="t" style="left:348px;top:1113.63px;font-size:12.25px;color:#808080;">(active)</div>
<div class="t" style="left:447px;top:1114.93px;font-size:11.9px;font-weight:bold;color:#000;">constrs_1</div>
<div class="t" style="left:528px;top:1114.93px;font-size:11.9px;font-weight:bold;color:#000;">Not started</div>
<div class="t" style="left:1423px;top:1114.93px;font-size:11.9px;font-weight:bold;color:#000;">Vivado Synthesis Defaults (Vivado Synthesis 2020)</div>
<div style="position:absolute;left:1781px;top:1108px;width:305px;height:25px;overflow:hidden">
<div class="t" style="left:0px;top:6.93px;font-size:11.9px;font-weight:bold;color:#000;">Vivado Synthesis Default Reports (Vivado Synthesis 2020)</div>
</div>
<svg style="position:absolute;left:298px;top:1139px" width="10" height="12" viewBox="0 0 10 12"><polygon points="1,1 9,6 1,11" fill="none" stroke="#9a9a9a" stroke-width="1.1"/></svg>
<div class="t" style="left:315px;top:1138.63px;font-size:12.25px;color:#000;">impl_1</div>
<div class="t" style="left:447px;top:1138.63px;font-size:12.25px;color:#000;">constrs_1</div>
<div class="t" style="left:528px;top:1138.63px;font-size:12.25px;color:#000;">Not started</div>
<div class="t" style="left:1423px;top:1138.63px;font-size:12.25px;color:#000;">Vivado Implementation Defaults (Vivado Implementation 2020)</div>
<div style="position:absolute;left:1781px;top:1133px;width:305px;height:25px;overflow:hidden">
<div class="t" style="left:0px;top:5.63px;font-size:12.25px;color:#000;">Vivado Implementation Default Reports (Vivado Implementation 2020)</div>
</div>
<svg style="position:absolute;left:264px;top:1167px" width="9" height="5" viewBox="0 0 9 5"><path d="M0.7,0.7 L4.5,4.3 L8.3,0.7" fill="none" stroke="#444" stroke-width="1.2"/></svg>
<svg style="position:absolute;left:281px;top:1164px" width="12" height="10" viewBox="0 0 12 10"><path d="M0.5,9.5 V1 Q0.5,0.5 1,0.5 H4 L5,1.5 H10.5 V4" fill="#f4f4f4" stroke="#cfcfcf" stroke-width="1"/><path d="M2,4 H12 L10.5,10 H0.5z" fill="#cdcdcd"/></svg>
<div class="t" style="left:299px;top:1163.63px;font-size:12.25px;color:#000;">Out-of-Context Module Runs</div>
<svg style="position:absolute;left:297px;top:1189px" width="13" height="11" viewBox="0 0 13 11"><path d="M1,5.5 L4.5,9 L12,1.5" fill="none" stroke="#2fa82f" stroke-width="2.4"/></svg>
<div class="t" style="left:315px;top:1188.63px;font-size:12.25px;color:#000;">mult_gen_0_synth_1</div>
<div class="t" style="left:447px;top:1188.63px;font-size:12.25px;color:#000;">mult_gen_0</div>
<div class="t" style="left:528px;top:1188.63px;font-size:12.25px;color:#000;">synth_design Complete!</div>
<div class="t" style="right:981px;top:1188.63px;font-size:12.25px;color:#000;">280</div>
<div class="t" style="right:949px;top:1188.63px;font-size:12.25px;color:#000;">32</div>
<div class="t" style="right:896px;top:1188.63px;font-size:12.25px;color:#000;">0.0</div>
<div class="t" style="right:843px;top:1188.63px;font-size:12.25px;color:#000;">0</div>
<div class="t" style="right:800px;top:1188.63px;font-size:12.25px;color:#000;">0</div>
<div style="position:absolute;left:1316px;top:1183px;width:34px;height:25px;overflow:hidden">
<div class="t" style="left:0px;top:5.63px;font-size:12.25px;color:#000;">10/31/2022</div>
</div>
<div class="t" style="left:1360px;top:1188.63px;font-size:12.25px;color:#000;">00:00:20</div>
<div class="t" style="left:1423px;top:1188.63px;font-size:12.25px;color:#000;">Vivado Synthesis Defaults (Vivado Synthesis 2020)</div>
<div style="position:absolute;left:1781px;top:1183px;width:305px;height:25px;overflow:hidden">
<div class="t" style="left:0px;top:5.63px;font-size:12.25px;color:#000;">Vivado Synthesis Default Reports (Vivado Synthesis 2020)</div>
</div>
<svg style="position:absolute;left:297px;top:1214px" width="13" height="11" viewBox="0 0 13 11"><path d="M1,5.5 L4.5,9 L12,1.5" fill="none" stroke="#2fa82f" stroke-width="2.4"/></svg>
<div class="t" style="left:315px;top:1213.63px;font-size:12.25px;color:#000;">div_gen_0</div>
<div class="t" style="left:528px;top:1213.63px;font-size:12.25px;color:#000;">Using cached IP results</div>
<div style="position:absolute;left:258px;top:1249px;width:1828px;height:14px;background:#f9f9f9;border-top:1px solid #e2e2e2;box-sizing:border-box"></div>
<svg style="position:absolute;left:262px;top:1252px" width="5" height="8" viewBox="0 0 5 8"><path d="M4.2,0.8 L1,4 L4.2,7.2" fill="none" stroke="#666" stroke-width="1.8"/></svg>
<div style="position:absolute;left:275px;top:1252px;width:1452px;height:8px;background:#bdbdbd;border-radius:4px"></div>
<svg style="position:absolute;left:2077px;top:1252px" width="5" height="8" viewBox="0 0 5 8"><path d="M0.8,0.8 L4,4 L0.8,7.2" fill="none" stroke="#666" stroke-width="1.8"/></svg>
</body></html>
